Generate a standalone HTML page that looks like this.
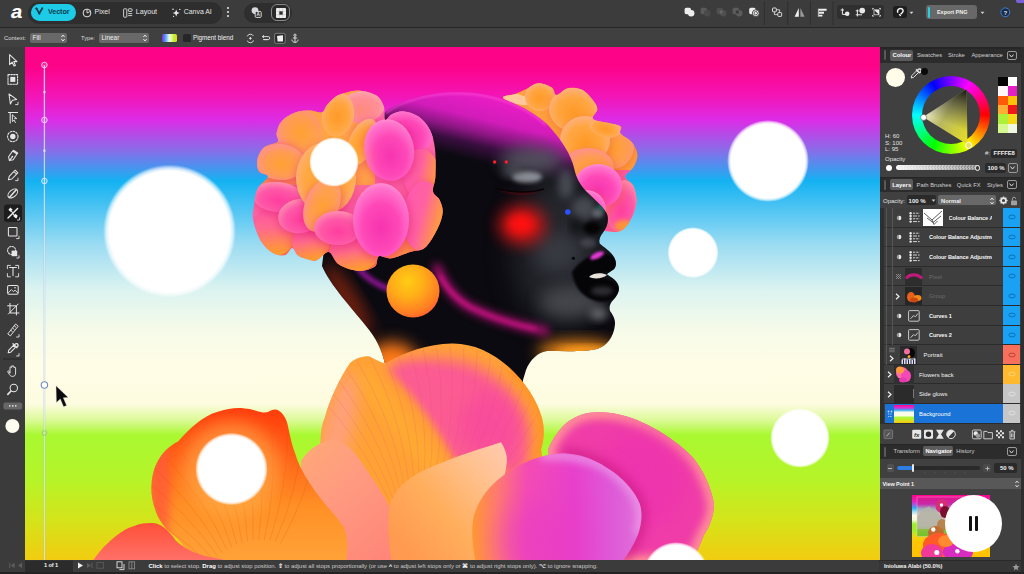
<!DOCTYPE html>
<html lang="en">
<head>
<meta charset="utf-8">
<title>Affinity – Inioluwa Alabi</title>
<style>
*{box-sizing:border-box;margin:0;padding:0}
html,body{width:1024px;height:574px;overflow:hidden;background:#3b3b3b}
body{position:relative;font-family:"Liberation Sans",sans-serif;font-size:7.5px;color:#e4e4e4;-webkit-font-smoothing:antialiased}
.abs{position:absolute}
.t{position:absolute;white-space:nowrap;line-height:10px;height:10px}
.b{font-weight:bold}
/* top bars */
#topbar{left:0;top:0;width:1024px;height:27px;background:#3c3c3c}
#ctxbar{left:0;top:27px;width:1024px;height:20px;background:#404040;border-top:1px solid #262626}
#lefttools{left:0;top:47px;width:25px;height:513px;background:#3b3b3b}
#status{left:0;top:560px;width:879px;height:14px;background:#3b3b3b}
#panel{left:879px;top:47px;width:145px;height:527px;background:#404040}
.pill{position:absolute;background:#2e2e2e;border-radius:11px}
.sel{position:absolute;background:#686868;border-radius:2px}
.dark{position:absolute;background:#2a2a2a;border-radius:2px}
.tabrow{position:absolute;left:0;width:145px;height:14px;background:#2c2c2c}
.tabhi{position:absolute;background:#5c5c5c;border-radius:2px;height:10.5px}
.chev{position:absolute;width:9.5px;height:9.5px;border:1px solid #9a9a9a;border-radius:2px}
.row{position:absolute;left:0;width:145px;height:19.6px;border-bottom:1px solid #2b2b2b}
.vis{position:absolute;left:124.3px;top:0;width:17px;height:18.8px}
.dim{color:#777}
svg{position:absolute;overflow:visible}
</style>
</head>
<body>
<!-- ARTWORK -->
<div class="abs" id="canvas" style="left:25px;top:47px;width:855px;height:513px;overflow:hidden;background:#fff;z-index:2">
<svg style="left:-25px;top:-47px" width="1024" height="574" viewBox="0 0 1024 574">
<defs>
<linearGradient id="bg" x1="0" y1="47" x2="0" y2="560" gradientUnits="userSpaceOnUse">
<stop offset="0.0000" stop-color="#fd0386"/>
<stop offset="0.0370" stop-color="#fd0388"/>
<stop offset="0.0936" stop-color="#f414b4"/>
<stop offset="0.1423" stop-color="#dc2ce6"/>
<stop offset="0.2008" stop-color="#8a6ce8"/>
<stop offset="0.2612" stop-color="#14b2f2"/>
<stop offset="0.3275" stop-color="#5cc8f3"/>
<stop offset="0.3860" stop-color="#9cdcf2"/>
<stop offset="0.4737" stop-color="#dcf3f0"/>
<stop offset="0.5517" stop-color="#f6fbe9"/>
<stop offset="0.6199" stop-color="#fffde6"/>
<stop offset="0.6959" stop-color="#fdfce0"/>
<stop offset="0.7271" stop-color="#dcfa98"/>
<stop offset="0.7563" stop-color="#a9f831"/>
<stop offset="0.8441" stop-color="#b6f428"/>
<stop offset="0.9220" stop-color="#d4e41a"/>
<stop offset="1.0000" stop-color="#f2cc10"/>
</linearGradient>
<filter color-interpolation-filters="sRGB" id="b1" x="-20%" y="-20%" width="140%" height="140%"><feGaussianBlur stdDeviation="1"/></filter>
<filter color-interpolation-filters="sRGB" id="b2" x="-30%" y="-30%" width="160%" height="160%"><feGaussianBlur stdDeviation="2.2"/></filter>
<filter color-interpolation-filters="sRGB" id="b4" x="-40%" y="-40%" width="180%" height="180%"><feGaussianBlur stdDeviation="4"/></filter>
<filter color-interpolation-filters="sRGB" id="b8" x="-50%" y="-50%" width="200%" height="200%"><feGaussianBlur stdDeviation="8"/></filter>
<filter color-interpolation-filters="sRGB" id="b14" x="-60%" y="-60%" width="220%" height="220%"><feGaussianBlur stdDeviation="14"/></filter>
<radialGradient id="glow"><stop offset="0" stop-color="#fff"/><stop offset="0.905" stop-color="#fff"/><stop offset="0.95" stop-color="#fff" stop-opacity="0.7"/><stop offset="1" stop-color="#fff" stop-opacity="0"/></radialGradient>

<radialGradient id="ball" cx="0.4" cy="0.32" r="0.75"><stop offset="0" stop-color="#ffcc14"/><stop offset="0.4" stop-color="#ffae18"/><stop offset="0.8" stop-color="#ff7e24"/><stop offset="1" stop-color="#ff5a30"/></radialGradient>
<linearGradient id="headg" x1="470" y1="92" x2="450" y2="172" gradientUnits="userSpaceOnUse"><stop offset="0" stop-color="#ea1cc4"/><stop offset="0.28" stop-color="#d21cba"/><stop offset="0.46" stop-color="#8a1682"/><stop offset="0.6" stop-color="#3a0e40"/><stop offset="0.8" stop-color="#0b0a10"/></linearGradient>
<clipPath id="headclip"><path id="headp" d="M384,113 C400,100 430,92 456,92 C490,91 525,104 547,124 C562,140 571,155 574,168 C576,178 580,184 584,189 C590,196 602,205 606.5,213 C609.500,219 607.500,227 603,232.500 C600,236 598.500,240 599.500,243.500 C603,247 611,251 614.500,258 C616.500,262 616.500,266 614.500,268.500 C612,271 608,272.500 607,274.500 C611,277 618.500,281 619,288 C619,294 615,298 611.500,302 C609.500,305 609,308 610,311 C613,315 616,320 614.800,326 C613.500,337 607,346 597,349 C585,352 565,351 547,351 C538,352 530,360 526,370 L523,380 L522,420 L392,420 L385,364 C382,350 376,338 366,326 C352,308 330,285 322,266 C330,200 350,140 384,113 Z"/></clipPath>

<radialGradient id="pk" cx="0.5" cy="0.6" r="0.65"><stop offset="0" stop-color="#f634ae"/><stop offset="0.5" stop-color="#ff48b8"/><stop offset="0.82" stop-color="#ff74cc"/><stop offset="1" stop-color="#ffa4da"/></radialGradient>
<radialGradient id="pk2" cx="0.5" cy="0.6" r="0.65"><stop offset="0" stop-color="#ff3e9e"/><stop offset="0.55" stop-color="#ff58a8"/><stop offset="1" stop-color="#ff9ab0"/></radialGradient>
<radialGradient id="or" cx="0.5" cy="0.55" r="0.62"><stop offset="0" stop-color="#ff9a26"/><stop offset="0.55" stop-color="#ffa642"/><stop offset="1" stop-color="#ffb494"/></radialGradient>
<radialGradient id="orp" cx="0.55" cy="0.55" r="0.62"><stop offset="0" stop-color="#ffa232"/><stop offset="0.55" stop-color="#ff9c54"/><stop offset="1" stop-color="#ff8e9e"/></radialGradient>
<linearGradient id="po" x1="0" y1="0" x2="1" y2="0.3"><stop offset="0" stop-color="#ff58b4"/><stop offset="0.55" stop-color="#ff62a0"/><stop offset="1" stop-color="#ff9a40"/></linearGradient>
<linearGradient id="pob" x1="0" y1="0" x2="0.2" y2="1"><stop offset="0" stop-color="#ff54ac"/><stop offset="0.5" stop-color="#ff6a8c"/><stop offset="1" stop-color="#ff9a30"/></linearGradient>
<radialGradient id="peach" cx="0.45" cy="0.6" r="0.65"><stop offset="0" stop-color="#ff8a7c"/><stop offset="0.6" stop-color="#ff8e98"/><stop offset="1" stop-color="#ffaab0"/></radialGradient>

<linearGradient id="bigp" x1="325" y1="0" x2="545" y2="0" gradientUnits="userSpaceOnUse"><stop offset="0" stop-color="#ff9a50"/><stop offset="0.2" stop-color="#ffa038"/><stop offset="0.42" stop-color="#ff8a60"/><stop offset="0.62" stop-color="#ff5c92"/><stop offset="0.8" stop-color="#ff5a8c"/><stop offset="0.93" stop-color="#ff8450"/><stop offset="1" stop-color="#ffa030"/></linearGradient>
<linearGradient id="bigp2" x1="0" y1="343" x2="0" y2="420" gradientUnits="userSpaceOnUse"><stop offset="0" stop-color="#ffa838" stop-opacity="1"/><stop offset="0.45" stop-color="#ffa838" stop-opacity="0.55"/><stop offset="1" stop-color="#ffa838" stop-opacity="0"/></linearGradient>
<linearGradient id="redp" x1="0" y1="408" x2="0" y2="560" gradientUnits="userSpaceOnUse"><stop offset="0" stop-color="#ff3c0c"/><stop offset="0.3" stop-color="#ff6016"/><stop offset="0.65" stop-color="#ff9026"/><stop offset="1" stop-color="#ffa238"/></linearGradient>
<linearGradient id="salm" x1="300" y1="450" x2="395" y2="560" gradientUnits="userSpaceOnUse"><stop offset="0" stop-color="#ffa878"/><stop offset="0.4" stop-color="#ff9a80"/><stop offset="1" stop-color="#ff8478"/></linearGradient>
<linearGradient id="smallo" x1="395" y1="540" x2="500" y2="450" gradientUnits="userSpaceOnUse"><stop offset="0" stop-color="#ff9a50"/><stop offset="0.4" stop-color="#ffae5c"/><stop offset="0.75" stop-color="#ffc08c"/><stop offset="1" stop-color="#ffc8a8"/></linearGradient>
<linearGradient id="backpk" x1="548" y1="420" x2="715" y2="540" gradientUnits="userSpaceOnUse"><stop offset="0" stop-color="#ff8a90"/><stop offset="0.25" stop-color="#f650a8"/><stop offset="0.55" stop-color="#ee38b0"/><stop offset="0.85" stop-color="#f45a90"/><stop offset="1" stop-color="#fa7878"/></linearGradient>
<linearGradient id="frontpk" x1="474" y1="0" x2="640" y2="0" gradientUnits="userSpaceOnUse"><stop offset="0" stop-color="#ff9638"/><stop offset="0.14" stop-color="#ff7a70"/><stop offset="0.32" stop-color="#f44cb4"/><stop offset="0.6" stop-color="#e840cc"/><stop offset="0.85" stop-color="#de5cd8"/><stop offset="1" stop-color="#e070d8"/></linearGradient>
<linearGradient id="blp" x1="0" y1="523" x2="0" y2="560" gradientUnits="userSpaceOnUse"><stop offset="0" stop-color="#ff5038"/><stop offset="1" stop-color="#ff7068"/></linearGradient>
<clipPath id="bigclip"><use href="#bigpp"/></clipPath>
<clipPath id="redclip"><path id="redpp" d="M151.6,484.5 C153,462 165,448 178,441.6 C190,428 203,416 217,412 C228,408 238,407.5 244.5,408.4 C255,409 262,414 268,412 C271,410 275,408.5 277.7,410 C283,413 286,418 287.5,424 C290,436 292,445 295,453 C300,470 310,484 318.7,496 C328,508 338,518 344,527.5 C348,538 348,550 346,562 L201.5,562 C192,555 184,547 178,539 C166,530 158,520 154.7,508 C152,500 151,492 151.6,484.5Z"/></clipPath>
<filter color-interpolation-filters="sRGB" id="b06" x="-10%" y="-10%" width="120%" height="120%"><feGaussianBlur stdDeviation="0.6"/></filter>
</defs>
<rect x="25" y="47" width="856" height="513" fill="url(#bg)"/>
<!--glows-->
<circle cx="169.5" cy="231" r="66.500" fill="url(#glow)"/>
<circle cx="768" cy="161" r="41" fill="url(#glow)"/>
<circle cx="693" cy="252.6" r="25.500" fill="url(#glow)"/>
<circle cx="800" cy="438" r="29.800" fill="url(#glow)"/>
<g id="backflower">
<clipPath id="bfclip"><path d="M503.0,98.0 C502.2,95.3 511.1,95.5 515.0,94.0 C519.0,92.5 522.9,90.6 526.7,88.8 C530.5,87.0 533.5,83.5 537.7,83.2 C541.9,83.0 548.7,85.3 551.8,87.3 C554.9,89.3 553.9,94.8 556.5,95.0 C559.1,95.2 563.3,89.1 567.5,88.2 C571.7,87.3 577.4,87.6 581.6,89.5 C585.8,91.4 590.0,96.5 592.6,99.8 C595.2,103.1 597.2,106.0 597.3,109.2 C597.4,112.4 590.9,116.7 593.0,119.0 C595.1,121.3 605.2,122.0 609.8,123.3 C614.4,124.5 619.0,124.8 620.8,126.5 C622.6,128.2 618.7,130.9 620.5,133.5 C622.3,136.1 629.0,138.7 631.8,142.2 C634.6,145.7 637.1,150.5 637.4,154.7 C637.7,158.9 635.5,163.6 633.4,167.3 C631.3,171.0 625.0,173.6 625.0,176.7 C625.0,179.8 631.5,181.8 633.4,186.0 C635.3,190.2 636.8,196.6 636.5,201.8 C636.2,207.1 634.1,212.8 631.8,217.5 C629.4,222.2 626.1,227.7 622.4,230.0 C618.7,232.3 615.2,232.4 609.8,231.6 C604.4,230.8 598.3,230.3 590.0,225.0 C581.7,219.7 568.3,212.5 560.0,200.0 C551.7,187.5 546.7,165.0 540.0,150.0 C533.3,135.0 526.2,118.7 520.0,110.0 C513.8,101.3 503.8,100.7 503.0,98.0 Z"/></clipPath>
<path d="M503.0,98.0 C502.2,95.3 511.1,95.5 515.0,94.0 C519.0,92.5 522.9,90.6 526.7,88.8 C530.5,87.0 533.5,83.5 537.7,83.2 C541.9,83.0 548.7,85.3 551.8,87.3 C554.9,89.3 553.9,94.8 556.5,95.0 C559.1,95.2 563.3,89.1 567.5,88.2 C571.7,87.3 577.4,87.6 581.6,89.5 C585.8,91.4 590.0,96.5 592.6,99.8 C595.2,103.1 597.2,106.0 597.3,109.2 C597.4,112.4 590.9,116.7 593.0,119.0 C595.1,121.3 605.2,122.0 609.8,123.3 C614.4,124.5 619.0,124.8 620.8,126.5 C622.6,128.2 618.7,130.9 620.5,133.5 C622.3,136.1 629.0,138.7 631.8,142.2 C634.6,145.7 637.1,150.5 637.4,154.7 C637.7,158.9 635.5,163.6 633.4,167.3 C631.3,171.0 625.0,173.6 625.0,176.7 C625.0,179.8 631.5,181.8 633.4,186.0 C635.3,190.2 636.8,196.6 636.5,201.8 C636.2,207.1 634.1,212.8 631.8,217.5 C629.4,222.2 626.1,227.7 622.4,230.0 C618.7,232.3 615.2,232.4 609.8,231.6 C604.4,230.8 598.3,230.3 590.0,225.0 C581.7,219.7 568.3,212.5 560.0,200.0 C551.7,187.5 546.7,165.0 540.0,150.0 C533.3,135.0 526.2,118.7 520.0,110.0 C513.8,101.3 503.8,100.7 503.0,98.0 Z" fill="#ffa040"/>
<g clip-path="url(#bfclip)"><g filter="url(#b06)">
<rect x="560" y="170" width="90" height="70" fill="#ff58b0"/>
<ellipse cx="517" cy="99" rx="15" ry="5" transform="rotate(14 517 99)" fill="#ffc89a" />
<ellipse cx="540" cy="97" rx="15" ry="14" transform="rotate(0 540 97)" fill="url(#or)" />
<ellipse cx="575" cy="112.5" rx="26.5" ry="23.5" transform="rotate(10 575 112.5)" fill="#e8501c" opacity="0.35" filter="url(#b4)"/>
<ellipse cx="574" cy="110" rx="25" ry="22" transform="rotate(10 574 110)" fill="url(#or)" />
<ellipse cx="613" cy="148.5" rx="23.5" ry="24.5" transform="rotate(0 613 148.5)" fill="#e8501c" opacity="0.35" filter="url(#b4)"/>
<ellipse cx="612" cy="146" rx="22" ry="23" transform="rotate(0 612 146)" fill="url(#orp)" />
<ellipse cx="586" cy="142.5" rx="26.5" ry="25.5" transform="rotate(0 586 142.5)" fill="#e8501c" opacity="0.35" filter="url(#b4)"/>
<ellipse cx="585" cy="140" rx="25" ry="24" transform="rotate(0 585 140)" fill="url(#or)" />
<ellipse cx="605" cy="128" rx="16" ry="9" transform="rotate(15 605 128)" fill="url(#or)" />
<ellipse cx="589" cy="170.5" rx="27.5" ry="21.5" transform="rotate(0 589 170.5)" fill="#e8501c" opacity="0.35" filter="url(#b4)"/>
<ellipse cx="588" cy="168" rx="26" ry="20" transform="rotate(0 588 168)" fill="url(#orp)" />
<ellipse cx="623" cy="208.5" rx="17.5" ry="27.5" transform="rotate(8 623 208.5)" fill="#e8501c" opacity="0.35" filter="url(#b4)"/>
<ellipse cx="622" cy="206" rx="16" ry="26" transform="rotate(8 622 206)" fill="url(#pk2)" />
<ellipse cx="599" cy="188.5" rx="25.5" ry="23.5" transform="rotate(0 599 188.5)" fill="#e8501c" opacity="0.35" filter="url(#b4)"/>
<ellipse cx="598" cy="186" rx="24" ry="22" transform="rotate(0 598 186)" fill="url(#pk)" />
<ellipse cx="587" cy="212.5" rx="21.5" ry="21.5" transform="rotate(0 587 212.5)" fill="#e8501c" opacity="0.35" filter="url(#b4)"/>
<ellipse cx="586" cy="210" rx="20" ry="20" transform="rotate(0 586 210)" fill="url(#pk)" />
<ellipse cx="624" cy="226" rx="10" ry="6" fill="#ff9438" filter="url(#b2)"/>
</g></g>
</g>

<g id="head">
<use href="#headp" fill="url(#headg)"/>
<g clip-path="url(#headclip)">
<path d="M386,113 C402,100 430,93.500 456,93.500 C490,92.500 524,105 546,125" stroke="#ff48d4" stroke-width="2.500" fill="none" opacity="0.650" filter="url(#b1)"/>
<!-- gray highlights -->
<ellipse cx="560" cy="250" rx="45" ry="75" fill="#25272d" filter="url(#b14)"/>
<ellipse cx="532" cy="160" rx="32" ry="13" fill="#555861" opacity="0.9" filter="url(#b8)"/>
<ellipse cx="527" cy="177" rx="15" ry="5.500" fill="#a4a8b0" opacity="0.8" filter="url(#b2)"/>
<ellipse cx="512" cy="172" rx="10" ry="5" fill="#5c5f68" opacity="0.7" filter="url(#b4)"/>
<ellipse cx="566" cy="184" rx="8" ry="15" fill="#50535c" opacity="0.85" filter="url(#b4)"/>
<ellipse cx="584" cy="208" rx="12" ry="12" fill="#4c4f57" opacity="0.9" filter="url(#b4)"/>
<ellipse cx="598" cy="213" rx="6" ry="5" fill="#70747c" opacity="0.8" filter="url(#b2)"/>
<ellipse cx="558" cy="252" rx="22" ry="20" fill="#3a3c44" opacity="0.9" filter="url(#b8)"/>
<ellipse cx="572" cy="302" rx="32" ry="16" fill="#484a50" opacity="0.9" filter="url(#b8)"/>
<ellipse cx="599" cy="314" rx="9" ry="6" fill="#8a8a8e" opacity="0.7" filter="url(#b4)"/>
<ellipse cx="588" cy="243" rx="8" ry="5" fill="#484a52" opacity="0.8" filter="url(#b2)"/>
<ellipse cx="603" cy="206" rx="4.500" ry="4" fill="#0c8a6a" opacity="0.85" filter="url(#b2)"/>
<!-- eye -->
<path d="M496,188 C510,193 530,193 544,189 C530,197 508,196 496,188Z" fill="#4a0a14" filter="url(#b1)"/>
<path d="M496,188 C510,193 530,193 544,189" stroke="#050505" stroke-width="1.6" fill="none"/>
<!-- cheek -->
<ellipse cx="522" cy="225" rx="23" ry="19" fill="#e81414" opacity="0.9" filter="url(#b8)"/>
<ellipse cx="521" cy="224" rx="12" ry="9" fill="#ff1010" filter="url(#b4)"/>
<!-- nostril / nose shadow -->
<ellipse cx="592" cy="228" rx="9" ry="6.500" fill="#030303" filter="url(#b2)"/><ellipse cx="576" cy="226" rx="5" ry="8" fill="#050507" opacity="0.700" filter="url(#b4)"/>
<!-- lips -->
<path d="M572,272 C582,258 600,247 614.500,258 C617,263 616,268 612,271 C604,273 596,274 588,277 C598,276 612,278 619,288 C619,297 608,304 596,301 C584,298 574,288 572,272Z" fill="#050507" filter="url(#b1)"/>
<ellipse cx="597" cy="255.500" rx="7.500" ry="3" transform="rotate(-25 597 255.500)" fill="#e23ad2" filter="url(#b1)"/>
<path d="M589,277 C594,272.500 602,272.500 607,275 C603,278.500 594,279.500 589,277Z" fill="#e8e2dc"/>
<ellipse cx="602" cy="291" rx="11" ry="4.500" fill="#2c2c32" filter="url(#b2)"/>
<!-- orange glows near chin and neck -->
<ellipse cx="578" cy="352" rx="40" ry="11" fill="#ff9218" filter="url(#b8)"/><ellipse cx="585" cy="352" rx="26" ry="5" fill="#ffa020" filter="url(#b4)"/>
<ellipse cx="392" cy="368" rx="28" ry="26" fill="#ff7a18" filter="url(#b8)"/>
<ellipse cx="348" cy="300" rx="9" ry="42" transform="rotate(-32 348 300)" fill="#b03010" opacity="0.7" filter="url(#b8)"/>
<!-- magenta line on jaw -->
<path d="M358,268 C366,278 376,285 392,290" stroke="#8a1490" stroke-width="6" fill="none" stroke-linecap="round" filter="url(#b2)"/>
<path d="M437,268 C444,284 452,296 466,305 C490,318 515,325 545,331" stroke="#b81078" stroke-width="8" fill="none" stroke-linecap="round" filter="url(#b4)"/><path d="M440,276 C447,290 456,299 470,307 C492,318 512,324 535,329" stroke="#d8148c" stroke-width="3" fill="none" stroke-linecap="round" filter="url(#b2)"/>
</g>
<circle cx="494.6" cy="162" r="1.7" fill="#ff2020"/><circle cx="506.3" cy="162" r="1.7" fill="#ff2020"/>
<circle cx="567.8" cy="212" r="2.8" fill="#2a50ff"/>
<circle cx="573.4" cy="258.2" r="1.5" fill="#000"/>
</g>
<circle cx="413" cy="291" r="26.5" fill="url(#ball)"/>

<g id="flower">
<clipPath id="flclip"><path d="M360.2,90.7 C354.8,90.2 348.6,92.0 344.5,93.0 C340.4,94.0 338.7,94.6 335.8,96.6 C332.9,98.6 329.3,102.4 327.0,105.0 C324.7,107.6 324.8,111.4 321.9,112.3 C319.0,113.2 314.1,110.5 309.7,110.5 C305.3,110.5 300.3,110.5 295.7,112.3 C291.1,114.0 285.0,117.5 281.8,121.0 C278.6,124.5 277.3,129.5 276.6,133.0 C275.9,136.5 279.6,139.6 277.6,141.9 C275.6,144.2 267.8,144.1 264.4,147.0 C261.0,149.9 258.3,155.2 257.4,159.3 C256.5,163.4 257.2,168.6 259.0,171.5 C260.8,174.4 268.2,173.8 267.9,176.7 C267.6,179.6 259.7,184.1 257.4,189.0 C255.1,193.9 254.6,200.8 253.9,206.0 C253.2,211.2 252.0,214.2 253.2,220.0 C254.4,225.8 257.6,235.5 260.9,241.0 C264.2,246.5 269.0,250.7 273.0,253.0 C277.0,255.3 281.8,255.8 285.0,255.0 C288.2,254.2 289.9,248.0 292.0,248.0 C294.1,248.0 295.6,253.3 297.5,255.0 C299.4,256.7 300.5,257.1 303.6,258.0 C306.7,258.9 311.8,261.4 316.0,260.4 C320.2,259.4 324.9,251.3 328.7,252.0 C332.5,252.7 334.1,261.5 339.0,264.6 C343.9,267.8 352.1,270.5 358.0,270.9 C363.9,271.2 371.2,269.1 374.7,266.7 C378.2,264.2 376.1,257.6 378.9,256.2 C381.7,254.8 386.2,259.0 391.4,258.3 C396.6,257.6 404.4,253.8 410.0,252.0 C415.6,250.2 420.3,251.6 424.9,247.8 C429.5,244.0 434.4,234.9 437.4,229.0 C440.4,223.1 442.3,217.2 442.7,212.3 C443.1,207.4 441.1,203.2 439.5,199.7 C437.9,196.2 433.7,195.3 433.0,191.4 C432.3,187.5 435.1,183.3 435.4,176.2 C435.7,169.1 435.9,156.7 435.0,149.0 C434.1,141.3 432.7,135.4 430.0,130.0 C427.3,124.6 422.9,119.7 418.6,116.6 C414.3,113.5 408.5,111.8 404.0,111.4 C399.5,111.1 394.6,113.1 391.5,114.5 C388.4,115.9 386.4,121.0 385.2,119.7 C383.9,118.5 385.4,111.0 384.0,107.0 C382.6,103.0 380.8,98.4 376.8,95.7 C372.8,93.0 365.6,91.2 360.2,90.7 Z"/></clipPath>
<path d="M360.2,90.7 C354.8,90.2 348.6,92.0 344.5,93.0 C340.4,94.0 338.7,94.6 335.8,96.6 C332.9,98.6 329.3,102.4 327.0,105.0 C324.7,107.6 324.8,111.4 321.9,112.3 C319.0,113.2 314.1,110.5 309.7,110.5 C305.3,110.5 300.3,110.5 295.7,112.3 C291.1,114.0 285.0,117.5 281.8,121.0 C278.6,124.5 277.3,129.5 276.6,133.0 C275.9,136.5 279.6,139.6 277.6,141.9 C275.6,144.2 267.8,144.1 264.4,147.0 C261.0,149.9 258.3,155.2 257.4,159.3 C256.5,163.4 257.2,168.6 259.0,171.5 C260.8,174.4 268.2,173.8 267.9,176.7 C267.6,179.6 259.7,184.1 257.4,189.0 C255.1,193.9 254.6,200.8 253.9,206.0 C253.2,211.2 252.0,214.2 253.2,220.0 C254.4,225.8 257.6,235.5 260.9,241.0 C264.2,246.5 269.0,250.7 273.0,253.0 C277.0,255.3 281.8,255.8 285.0,255.0 C288.2,254.2 289.9,248.0 292.0,248.0 C294.1,248.0 295.6,253.3 297.5,255.0 C299.4,256.7 300.5,257.1 303.6,258.0 C306.7,258.9 311.8,261.4 316.0,260.4 C320.2,259.4 324.9,251.3 328.7,252.0 C332.5,252.7 334.1,261.5 339.0,264.6 C343.9,267.8 352.1,270.5 358.0,270.9 C363.9,271.2 371.2,269.1 374.7,266.7 C378.2,264.2 376.1,257.6 378.9,256.2 C381.7,254.8 386.2,259.0 391.4,258.3 C396.6,257.6 404.4,253.8 410.0,252.0 C415.6,250.2 420.3,251.6 424.9,247.8 C429.5,244.0 434.4,234.9 437.4,229.0 C440.4,223.1 442.3,217.2 442.7,212.3 C443.1,207.4 441.1,203.2 439.5,199.7 C437.9,196.2 433.7,195.3 433.0,191.4 C432.3,187.5 435.1,183.3 435.4,176.2 C435.7,169.1 435.9,156.7 435.0,149.0 C434.1,141.3 432.7,135.4 430.0,130.0 C427.3,124.6 422.9,119.7 418.6,116.6 C414.3,113.5 408.5,111.8 404.0,111.4 C399.5,111.1 394.6,113.1 391.5,114.5 C388.4,115.9 386.4,121.0 385.2,119.7 C383.9,118.5 385.4,111.0 384.0,107.0 C382.6,103.0 380.8,98.4 376.8,95.7 C372.8,93.0 365.6,91.2 360.2,90.7 Z" fill="#ff6aa8"/>
<g clip-path="url(#flclip)"><g filter="url(#b06)">
<rect x="245" y="85" width="130" height="100" fill="#ffa048"/>
<rect x="245" y="225" width="200" height="50" fill="#ff9440"/>
<ellipse cx="362" cy="107" rx="23" ry="16" transform="rotate(-8 362 107)" fill="url(#peach)" />
<ellipse cx="338" cy="115" rx="16" ry="22" transform="rotate(10 338 115)" fill="url(#or)" />
<ellipse cx="298" cy="132" rx="23" ry="25" transform="rotate(-35 298 132)" fill="url(#orp)" />
<ellipse cx="281" cy="164.5" rx="26.5" ry="19.5" transform="rotate(5 281 164.5)" fill="#e01870" opacity="0.45" filter="url(#b4)"/>
<ellipse cx="280" cy="162" rx="25" ry="18" transform="rotate(5 280 162)" fill="url(#orp)" />
<ellipse cx="409" cy="131" rx="25" ry="21" transform="rotate(25 409 131)" fill="url(#pk)" />
<ellipse cx="422" cy="176.5" rx="19.5" ry="26.5" transform="rotate(0 422 176.5)" fill="#e01870" opacity="0.45" filter="url(#b4)"/>
<ellipse cx="421" cy="174" rx="18" ry="25" transform="rotate(0 421 174)" fill="url(#po)" />
<ellipse cx="424" cy="218.5" rx="21.5" ry="36.5" transform="rotate(5 424 218.5)" fill="#e01870" opacity="0.45" filter="url(#b4)"/>
<ellipse cx="423" cy="216" rx="20" ry="35" transform="rotate(5 423 216)" fill="url(#po)" />
<ellipse cx="276" cy="234.5" rx="23.5" ry="25.5" transform="rotate(10 276 234.5)" fill="#e01870" opacity="0.45" filter="url(#b4)"/>
<ellipse cx="275" cy="232" rx="22" ry="24" transform="rotate(10 275 232)" fill="url(#pob)" />
<ellipse cx="279" cy="199.5" rx="27.5" ry="16.5" transform="rotate(5 279 199.5)" fill="#e01870" opacity="0.45" filter="url(#b4)"/>
<ellipse cx="278" cy="197" rx="26" ry="15" transform="rotate(5 278 197)" fill="url(#pk2)" />
<ellipse cx="312" cy="245.5" rx="20.5" ry="19.5" transform="rotate(0 312 245.5)" fill="#e01870" opacity="0.45" filter="url(#b4)"/>
<ellipse cx="311" cy="243" rx="19" ry="18" transform="rotate(0 311 243)" fill="url(#pob)" />
<ellipse cx="355" cy="255.5" rx="26.5" ry="20.5" transform="rotate(0 355 255.5)" fill="#e01870" opacity="0.45" filter="url(#b4)"/>
<ellipse cx="354" cy="253" rx="25" ry="19" transform="rotate(0 354 253)" fill="url(#pob)" />
<ellipse cx="301" cy="218.5" rx="23.5" ry="18.5" transform="rotate(-10 301 218.5)" fill="#e01870" opacity="0.45" filter="url(#b4)"/>
<ellipse cx="300" cy="216" rx="22" ry="17" transform="rotate(-10 300 216)" fill="url(#pk2)" />
<ellipse cx="327" cy="180.5" rx="31.5" ry="37.5" transform="rotate(0 327 180.5)" fill="#e01870" opacity="0.45" filter="url(#b4)"/>
<ellipse cx="326" cy="178" rx="30" ry="36" transform="rotate(0 326 178)" fill="url(#or)" />
<ellipse cx="323" cy="207.5" rx="18.5" ry="29.5" transform="rotate(22 323 207.5)" fill="#e01870" opacity="0.45" filter="url(#b4)"/>
<ellipse cx="322" cy="205" rx="17" ry="28" transform="rotate(22 322 205)" fill="url(#orp)" />
<ellipse cx="339" cy="230.5" rx="25.5" ry="18.5" transform="rotate(0 339 230.5)" fill="#e01870" opacity="0.45" filter="url(#b4)"/>
<ellipse cx="338" cy="228" rx="24" ry="17" transform="rotate(0 338 228)" fill="url(#pk2)" />
<ellipse cx="363" cy="144.5" rx="14.5" ry="26.5" transform="rotate(25 363 144.5)" fill="#e01870" opacity="0.45" filter="url(#b4)"/>
<ellipse cx="362" cy="142" rx="13" ry="25" transform="rotate(25 362 142)" fill="url(#or)" />
<ellipse cx="390" cy="152.5" rx="26.5" ry="32.5" transform="rotate(-10 390 152.5)" fill="#e01870" opacity="0.45" filter="url(#b4)"/>
<ellipse cx="389" cy="150" rx="25" ry="31" transform="rotate(-10 389 150)" fill="url(#pk)" />
<ellipse cx="382" cy="222.5" rx="29.5" ry="38.5" transform="rotate(0 382 222.5)" fill="#e01870" opacity="0.45" filter="url(#b4)"/>
<ellipse cx="381" cy="220" rx="28" ry="37" transform="rotate(0 381 220)" fill="url(#pk)" />
</g></g>
<circle cx="334" cy="162" r="32" fill="#ffb040" opacity="0.5" filter="url(#b8)"/>
<circle cx="334" cy="162" r="24.800" fill="url(#glow)"/>
</g>
<g id="petals">
<!-- big back petal -->
<path id="bigpp" d="M369.5,356.4 C375,359 380,362 385,363.4 C405,352 428,344 451.6,343.5 C472,343 492,352 509,367.3 C525,382 537,400 542,418 C545,430 544,440 541,449.4 C543,460 545,470 545,485 L330,520 C322,500 318,470 320.7,437.7 C321,430 322,424 324.6,418 C330,398 340,378 350,363 C356,358 363,356 369.5,356.4Z" fill="#ffa236"/>
<g clip-path="url(#bigclip)">
<ellipse cx="338" cy="430" rx="14" ry="60" transform="rotate(14 338 430)" fill="#ffa07c" filter="url(#b8)"/>
<path d="M388,366 C410,358 440,356 470,364 C505,376 528,408 530,440 L526,480 L470,462 C452,432 425,398 388,366Z" fill="#fb5896" filter="url(#b8)"/><path d="M390,368 C415,364 450,370 480,392 L476,462 L456,462 C440,432 418,398 390,368Z" fill="#fb5c92" filter="url(#b4)"/>
<ellipse cx="488" cy="425" rx="30" ry="32" fill="#f84c9c" opacity="0.8" filter="url(#b8)"/>
<path d="M362,372 C382,402 410,438 436,470" stroke="#ffb030" stroke-width="14" fill="none" filter="url(#b8)" opacity="0.8"/>
<g stroke="#e8487c" stroke-width="0.7" fill="none" opacity="0.25"><path d="M389.8,502.7 Q360.1,435.0 306.7,383.9"/><path d="M393.6,500.2 Q368.3,430.7 318.2,376.4"/><path d="M397.5,498.0 Q376.7,427.1 330.2,369.6"/><path d="M401.5,496.1 Q385.3,423.9 342.6,363.6"/><path d="M405.7,494.4 Q394.1,421.3 355.3,358.4"/><path d="M409.9,492.9 Q403.0,419.3 368.3,354.0"/><path d="M414.3,491.8 Q412.1,417.9 381.6,350.5"/><path d="M418.6,490.9 Q421.2,417.0 395.1,347.8"/><path d="M423.1,490.3 Q430.4,416.8 408.8,346.1"/><path d="M427.6,490.0 Q439.5,417.1 422.5,345.1"/><path d="M432.0,490.0 Q448.6,418.0 436.3,345.1"/><path d="M436.5,490.3 Q457.7,419.5 450.0,345.9"/><path d="M441.0,490.9 Q466.6,421.5 463.6,347.6"/><path d="M445.3,491.7 Q475.4,424.1 477.1,350.2"/><path d="M449.7,492.8 Q484.0,427.3 490.5,353.7"/><path d="M453.9,494.2 Q492.4,431.1 503.5,358.0"/><path d="M458.1,495.9 Q500.5,435.3 516.3,363.1"/><path d="M462.1,497.8 Q508.3,440.1 528.7,369.0"/><path d="M466.1,500.0 Q515.8,445.3 540.7,375.7"/><path d="M469.8,502.4 Q523.0,451.0 552.3,383.2"/><path d="M473.4,505.1 Q529.8,457.2 563.4,391.4"/><path d="M476.8,508.0 Q536.1,463.8 573.9,400.2"/></g>
<path d="M509,367 C528,385 541,405 543,425 C545,440 541,450 536,458" stroke="#ff9226" stroke-width="9" fill="none" filter="url(#b4)"/>
</g>
<!-- salmon petal -->
<path d="M301,461 C308,450 320,441 334,439.6 C344,442 352,449 357.8,457 C368,472 378,486 386,500 C392,512 397,524 400,535 L402,562 L300,562Z" fill="url(#salm)"/>
<!-- red-orange petal w/ glow -->
<use href="#redpp" fill="url(#redp)"/>
<g clip-path="url(#redclip)">
<ellipse cx="160" cy="490" rx="10" ry="60" fill="#ff5a3a" opacity="0.8" filter="url(#b4)"/>
<g stroke="#e8400c" stroke-width="0.7" fill="none" opacity="0.28"><path d="M208.0,570.0 Q164.8,534.9 112.8,515.0"/><path d="M211.1,565.3 Q171.3,526.3 121.3,501.7"/><path d="M214.5,560.9 Q178.5,518.4 131.1,489.2"/><path d="M218.3,556.8 Q186.4,511.2 141.9,477.7"/><path d="M222.5,553.2 Q195.0,504.7 153.8,467.3"/><path d="M227.0,549.9 Q204.2,499.1 166.6,458.0"/><path d="M231.8,547.0 Q213.8,494.3 180.2,449.9"/><path d="M236.9,544.6 Q223.8,490.5 194.5,443.1"/><path d="M242.1,542.7 Q234.1,487.6 209.4,437.7"/><path d="M247.5,541.3 Q244.7,485.7 224.7,433.7"/><path d="M253.0,540.4 Q255.4,484.8 240.3,431.1"/><path d="M258.6,540.0 Q266.1,484.8 256.0,430.0"/><path d="M264.2,540.1 Q276.8,485.9 271.9,430.4"/><path d="M269.7,540.8 Q287.3,487.9 287.6,432.3"/><path d="M275.2,542.0 Q297.6,491.0 303.0,435.5"/><path d="M280.5,543.6 Q307.6,494.9 318.1,440.3"/></g>
<circle cx="231.5" cy="469" r="48" fill="#ffb450" opacity="0.55" filter="url(#b8)"/>
</g>
<circle cx="231.5" cy="469" r="36.300" fill="url(#glow)"/>
<!-- bottom-left petal -->
<path d="M92,562 C97,555 102,548 108,543 C117,534 126,528 135.5,525.4 C142,523 149,522.6 155.6,523.3 C163,525 170,532 175.7,540.4 C184,548 192,552 205,556 L235,562Z" fill="url(#blp)"/>
<!-- back right pink petal -->
<clipPath id="bkclip"><path d="M548,449.4 C553,438 560,428 567.5,422 C577,415 588,412 598.8,412.3 C618,412 637,419 653.4,428 C668,436 682,446 692.5,457 C703,470 711,486 714,504 C714,515 710,526 704,535 C700,545 696,553 692.5,562 L560,562Z"/></clipPath>
<path d="M548,449.4 C553,438 560,428 567.5,422 C577,415 588,412 598.8,412.3 C618,412 637,419 653.4,428 C668,436 682,446 692.5,457 C703,470 711,486 714,504 C714,515 710,526 704,535 C700,545 696,553 692.5,562 L560,562Z" fill="#f03ea8"/>
<g clip-path="url(#bkclip)">
<path d="M548,449.4 C553,438 560,428 567.5,422 C577,415 588,412 598.8,412.3 C618,412 637,419 653.4,428 C668,436 682,446 692.5,457 C703,470 711,486 714,504 C714,515 710,526 704,535 C700,545 696,553 692.5,562 L560,562Z" fill="none" stroke="#ff8e98" stroke-width="14" filter="url(#b4)"/>
<ellipse cx="640" cy="480" rx="45" ry="50" fill="#ee34ae" opacity="0.9" filter="url(#b14)"/>
<path d="M563.6,453.300 C583,454 600,462 614.4,472.800 C626,482 635,492 639.8,504 C643,515 641,526 637.8,535 C634,545 628,554 622,562" fill="none" stroke="#c81880" stroke-width="12" opacity="0.55" filter="url(#b4)"/>
</g>
<!-- small orange petal -->
<path d="M501,442.3 C505,448 507,455 507,461 C505,480 498,500 490,520 L480,562 L391.7,562 C388,540 387,520 389.8,504 C395,490 406,480 419,472.8 C440,462 470,452 501,442.3Z" fill="url(#smallo)"/>
<!-- front pink petal -->
<clipPath id="frclip"><path d="M563.6,453.3 C583,454 600,462 614.4,472.8 C626,482 635,492 639.8,504 C643,515 641,526 637.8,535 C634,545 628,554 622,562 L475.7,562 C472,545 471,530 473.8,515.8 C478,502 486,490 497,480.6 C515,465 540,454 563.6,453.3Z"/></clipPath>
<path d="M563.6,453.3 C583,454 600,462 614.4,472.8 C626,482 635,492 639.8,504 C643,515 641,526 637.8,535 C634,545 628,554 622,562 L475.7,562 C472,545 471,530 473.8,515.8 C478,502 486,490 497,480.6 C515,465 540,454 563.6,453.3Z" fill="url(#frontpk)"/>
<g clip-path="url(#frclip)">
<path d="M540,455 C583,454 600,462 614.4,472.800 C626,482 635,492 639.8,504 C643,515 641,526 637.8,535" fill="none" stroke="#eea0ea" stroke-width="9" opacity="0.8" filter="url(#b4)"/>
<ellipse cx="540" cy="540" rx="40" ry="40" fill="#e83cc4" opacity="0.6" filter="url(#b14)"/>
</g>
<circle cx="676" cy="575" r="33" fill="url(#glow)"/>
</g>

<g id="gradline">
<path d="M44.400,65 V560" stroke="#8fb0e0" stroke-width="1.600" opacity="0.550"/>
<path d="M44.400,65 V560" stroke="#ffffff" stroke-width="0.900" opacity="0.700"/>
<g fill="#ffffff" fill-opacity="0.150" stroke="#f4ecff" stroke-opacity="0.900" stroke-width="0.900">
<circle cx="44.400" cy="65" r="2.800"/><circle cx="44.400" cy="120" r="2.800"/><circle cx="44.400" cy="181" r="2.800"/>
</g>
<circle cx="44.400" cy="385" r="3.200" fill="#fff" stroke="#6d8fc4" stroke-width="1.100"/>
<circle cx="44.400" cy="433" r="2.300" fill="#c8f080" fill-opacity="0.600" stroke="#9ab8a0" stroke-width="0.800"/>
<g fill="#e8eeff" opacity="0.800"><rect x="43.300" y="91" width="2.200" height="2.200"/><rect x="43.300" y="149.500" width="2.200" height="2.200"/></g>
</g>
<path d="M56,385.800 L56.400,402.600 L60.300,398.900 L63.600,406.800 L66.600,405.400 L63.300,397.800 L68.200,397.400Z" fill="#0a0a0a" stroke="#d8d8d8" stroke-opacity="0.600" stroke-width="0.700"/>

</svg>

</div>

<!-- TOP BAR -->
<div class="abs" id="topbar">
<!-- logo -->
<svg style="left:9px;top:4px" width="16" height="16" viewBox="0 0 16 16"><text x="1" y="13.6" transform="translate(2.4 0) skewX(-10) scale(1.12 1)" font-family="Liberation Sans,sans-serif" font-weight="bold" font-size="18.5" fill="#fff">a</text></svg>
<div class="pill" style="left:28px;top:2px;width:194px;height:22px"></div>
<div class="abs" style="left:31px;top:3.5px;width:45px;height:17.5px;border-radius:9px;background:#1ecbe6"></div>
<svg style="left:35px;top:7.400px" width="9" height="9" viewBox="0 0 9 9"><path d="M1.400,1.400 L4.300,6.400 L7.200,1.400" fill="none" stroke="#0b3b52" stroke-width="1.700" stroke-linejoin="round" stroke-linecap="round"/><circle cx="1.400" cy="1.400" r="1" fill="#0b3b52"/><circle cx="7.200" cy="1.400" r="1" fill="#0b3b52"/><circle cx="4.300" cy="6.600" r="1.100" fill="#0b3b52"/></svg>
<div class="t b" style="left:48px;top:7px;color:#0b3b52;font-size:7.2px;letter-spacing:-0.1px">Vector</div>
<svg style="left:82px;top:7.5px" width="10" height="10" viewBox="0 0 10 10"><circle cx="5" cy="5" r="3.9" fill="none" stroke="#e0e0e0" stroke-width="1"/><path d="M5,5 L5,1.2 M5,5 L8.4,3.4" stroke="#e0e0e0" stroke-width="0.9" fill="none"/></svg>
<div class="t" style="left:94.6px;top:7px;color:#e6e6e6;font-size:7px">Pixel</div>
<svg style="left:123px;top:7.5px" width="10" height="10" viewBox="0 0 10 10"><rect x="0.6" y="0.8" width="3.2" height="8.4" rx="0.6" fill="none" stroke="#e0e0e0" stroke-width="0.9"/><rect x="5.4" y="0.8" width="3.6" height="2.6" rx="0.5" fill="none" stroke="#e0e0e0" stroke-width="0.9"/><path d="M5.2,5.6 H9.2 M5.2,7.6 H9.2" stroke="#e0e0e0" stroke-width="0.9"/></svg>
<div class="t" style="left:135.8px;top:7px;color:#e6e6e6;font-size:7.1px">Layout</div>
<svg style="left:171px;top:7px" width="11" height="11" viewBox="0 0 11 11"><path d="M5.2,2.4 L6.2,4.9 L8.7,5.9 L6.2,6.9 L5.2,9.4 L4.2,6.9 L1.7,5.9 L4.2,4.9Z" fill="#e8e8e8"/><circle cx="2" cy="2.2" r="0.8" fill="#e8e8e8"/><circle cx="8.8" cy="2.4" r="0.7" fill="#e8e8e8"/><circle cx="2.6" cy="9.4" r="0.6" fill="#e8e8e8"/></svg>
<div class="t" style="left:183.8px;top:7px;color:#e6e6e6;font-size:6.9px">Canva AI</div>
<svg style="left:226px;top:6px" width="4" height="12" viewBox="0 0 4 12"><circle cx="2" cy="2" r="1" fill="#e8e8e8"/><circle cx="2" cy="6" r="1" fill="#e8e8e8"/><circle cx="2" cy="10" r="1" fill="#e8e8e8"/></svg>
<!-- second pill group -->
<div class="pill" style="left:244px;top:2.5px;width:48px;height:20px;border-radius:10px"></div>
<svg style="left:250px;top:6px" width="14" height="13" viewBox="0 0 14 13"><circle cx="5" cy="4.6" r="3.4" fill="#d8d8d8"/><rect x="5.2" y="5.4" width="6" height="6" rx="1" fill="#2e2e2e" stroke="#e8e8e8" stroke-width="0.9"/><text x="6.4" y="10.4" font-size="4.6" font-weight="bold" fill="#e8e8e8" font-family="Liberation Sans,sans-serif">A</text></svg>
<div class="abs" style="left:271px;top:4px;width:19px;height:17px;border-radius:6px;border:1px solid #8a8a8a;background:#2a2a2a"></div>
<svg style="left:275.5px;top:7.5px" width="10" height="10" viewBox="0 0 10 10"><rect x="0" y="0" width="10" height="10" rx="1" fill="#f0f0f0"/><rect x="3" y="3" width="4" height="4" fill="#2a2a2a"/><path d="M3.3,0 V10 M6.7,0 V10 M0,3.3 H10 M0,6.7 H10" stroke="#bdbdbd" stroke-width="0.5"/></svg>
<!-- right icon cluster -->
<svg style="left:680px;top:0px" width="160" height="27" viewBox="680 0 160 27">
<path d="M764.300,1 V25 M787.700,1 V25 M810.400,1 V25 M833,1 V25" stroke="#2f2f2f" stroke-width="1"/>
<g fill="#eeeeee"><rect x="684.600" y="7.800" width="6.400" height="6.400" rx="1.600"/><circle cx="691.200" cy="13.200" r="3.200"/></g>
<g fill="#5a5a5a"><rect x="700.600" y="7.800" width="6.400" height="6.400" rx="1.600"/><circle cx="707.200" cy="13.200" r="3.200" fill="#4a4a4a"/></g>
<g fill="#4e4e4e"><rect x="716.600" y="7.800" width="6.400" height="6.400" rx="1.600"/><circle cx="723.200" cy="13.200" r="3.200"/><circle cx="721.200" cy="12" r="1.800" fill="#666"/></g>
<g fill="#5c5c5c"><rect x="732.600" y="7.800" width="6.400" height="6.400" rx="1.600"/><circle cx="739.200" cy="13.200" r="3.200"/><circle cx="737.400" cy="12" r="1.800" fill="#3c3c3c"/></g>
<g><rect x="749.200" y="7.800" width="6.400" height="6.400" rx="1.600" fill="#eeeeee"/><circle cx="755.800" cy="13.200" r="3.400" fill="#eeeeee" stroke="#3c3c3c" stroke-width="0.900"/><circle cx="755.800" cy="13.200" r="1.700" fill="none" stroke="#3c3c3c" stroke-width="0.800"/></g>
<g fill="none" stroke="#e8e8e8" stroke-width="0.950"><rect x="772.500" y="8" width="3.800" height="3.800" rx="0.700"/><rect x="777.800" y="12.600" width="3.800" height="3.800" rx="0.700"/><path d="M776.400,9.800 H779.600 V12.400 M777.600,14.600 H774.400 V12" stroke-width="0.800"/></g>
<path d="M798.800,8 V16.800 H794.600Z" fill="#f0f0f0"/><path d="M800.400,8 V16.800 H804.600Z" fill="#9a9a9a"/>
<path d="M818.400,8.600 V16.800" stroke="#ededed" stroke-width="0.800"/><path d="M819,9.800 H826.600 M819,12.700 H824 M819,15.600 H822.400" stroke="#ededed" stroke-width="1.900"/>
</svg>
<div class="pill" style="left:837px;top:5.200px;width:46.500px;height:14px;border-radius:3px;background:#2f2f2f"></div>
<svg style="left:836px;top:4px" width="50" height="18" viewBox="836 4 50 18">
<g fill="none" stroke="#e8e8e8" stroke-width="1"><path d="M842.400,8.400 V14.400 H848.400 M840.600,10 H844"/><circle cx="847.200" cy="13.800" r="2.300" fill="#e8e8e8" stroke="none"/></g>
<g><circle cx="862.200" cy="10.600" r="2.900" fill="#e8e8e8"/><path d="M857.400,9.600 V16.400 M855.800,14.800 H862 M855.800,10.800 H858.600" stroke="#e8e8e8" stroke-width="1" fill="none"/></g>
<g fill="none" stroke="#e8e8e8" stroke-width="0.900"><path d="M872.600,9.600 V8.400 H873.800 M879.200,8.400 H880.400 V9.600 M880.400,15 V16.200 H879.200 M873.800,16.200 H872.600 V15"/><path d="M874.200,10 H879 V14.800Z" fill="#e8e8e8" stroke="none"/><rect x="874" y="9.800" width="5" height="5" stroke-width="0.700"/></g>
</svg>
<div class="abs" style="left:893.400px;top:5.600px;width:13.400px;height:12.800px;border-radius:2.500px;background:#1e1e1e"></div>
<svg style="left:895.600px;top:7.400px" width="9" height="10" viewBox="0 0 9 10"><path d="M1.800,5.800 C0.800,3.400 2.400,1.400 4.600,1.500 C7,1.600 8,4.200 6.200,5.700 L4.600,7.200" fill="none" stroke="#f2f2f2" stroke-width="1.500" stroke-linecap="butt"/><path d="M3.400,7.600 l1.100,1" stroke="#f2f2f2" stroke-width="1.300" stroke-linecap="round"/></svg>
<svg style="left:909px;top:11px" width="5" height="4" viewBox="0 0 5 4"><path d="M0.6,0.8 L2.5,3 L4.4,0.8Z" fill="#d8d8d8"/></svg>
<div class="abs" style="left:926.200px;top:5.300px;width:51.200px;height:13.700px;border-radius:3px;background:#686868;overflow:hidden"><div class="abs" style="left:1.400px;top:1.400px;width:2.400px;height:10.900px;border-radius:1px;background:#25d0e0"></div></div>
<div class="t b" style="left:937px;top:7.300px;font-size:5.500px;letter-spacing:-0.050px;color:#f0f0f0">Export PNG</div>
<svg style="left:980.400px;top:10.800px" width="5" height="4" viewBox="0 0 5 4"><path d="M0.600,0.800 L2.500,3 L4.400,0.800Z" fill="#d8d8d8"/></svg>
<svg style="left:999px;top:6px" width="13" height="13" viewBox="0 0 13 13"><circle cx="6.300" cy="6.300" r="4.400" fill="#1b2944" stroke="#3f7fd2" stroke-width="1"/><text x="6.300" y="8.600" text-anchor="middle" font-size="6.200" font-weight="bold" fill="#d8e4fb" font-family="Liberation Sans,sans-serif">?</text></svg><div class="abs" style="left:1016px;top:-2px;width:9px;height:5px;border-radius:2px;background:#7a62d6"></div>

</div>
<div class="abs" id="ctxbar">
<div class="t" style="left:4px;top:4.6px;font-size:5.9px;color:#dcdcdc">Context:</div>
<div class="sel" style="left:30px;top:4.6px;width:36.5px;height:10.4px"></div>
<div class="t" style="left:32.5px;top:4.8px;font-size:6.4px;color:#efefef">Fill</div>
<svg style="left:60.5px;top:6px" width="4" height="8" viewBox="0 0 4 8"><path d="M0.4,3 L2,1 L3.6,3 M0.4,5 L2,7 L3.6,5" fill="none" stroke="#f0f0f0" stroke-width="0.9"/></svg>
<div class="t" style="left:81px;top:4.6px;font-size:5.7px;color:#dcdcdc">Type:</div>
<div class="sel" style="left:99px;top:4.6px;width:50px;height:10.4px"></div>
<div class="t" style="left:101.5px;top:4.8px;font-size:6.4px;color:#efefef">Linear</div>
<svg style="left:143px;top:6px" width="4" height="8" viewBox="0 0 4 8"><path d="M0.4,3 L2,1 L3.6,3 M0.4,5 L2,7 L3.6,5" fill="none" stroke="#f0f0f0" stroke-width="0.9"/></svg>
<div class="abs" style="left:162.4px;top:6px;width:14.6px;height:8px;border-radius:1.5px;background:linear-gradient(90deg,#8a2be0 0%,#4aa0f0 22%,#e8f8f0 48%,#e8f890 62%,#b8f030 80%,#f0d020 100%)"></div>
<div class="abs" style="left:182.5px;top:5.6px;width:8px;height:8.4px;border-radius:1.5px;background:#262626"></div>
<div class="t" style="left:193px;top:4.6px;font-size:6.3px;color:#f0f0f0">Pigment blend</div>
<svg style="left:245px;top:4px" width="60" height="12" viewBox="245 31 60 12">
<g fill="none" stroke="#e4e4e4" stroke-width="0.9"><path d="M247.2,35.4 A3.4,3.4 0 0 1 253.4,35 M253.6,39.4 A3.4,3.4 0 0 1 247.2,39.6"/><circle cx="250.4" cy="37.4" r="0.8" fill="#e4e4e4"/>
<path d="M262.4,35.6 H268.2 M262.4,35.6 l1.6,-1.4 M262.4,35.6 l1.6,1.4 M263,38.6 H267.6 a0,0 0 0 0 0,0"/><path d="M268.2,35.6 a1.5,1.5 0 0 1 0,3 H264"/></g>
<rect x="274.6" y="32.4" width="10.6" height="10" rx="1.6" fill="#2a2a2a" stroke="#9a9a9a" stroke-width="0.7"/>
<path d="M277,35 C279,34.4 281,34.2 283,34.2 V40.4 H277.4 C277.8,38.4 277,37 277,35Z" fill="#f0f0f0"/>
<g fill="none" stroke="#e4e4e4" stroke-width="0.9"><circle cx="295" cy="34.2" r="1.1"/><path d="M295,35.4 V41.2 M292.8,37 H297.2 M291.8,38.6 C292.2,40.6 293.6,41.4 295,41.4 C296.4,41.4 297.8,40.6 298.2,38.6"/></g>
</svg>

</div>
<div class="abs" id="lefttools">
<svg style="left:0;top:-47px" width="25" height="560" viewBox="0 0 25 560">
<g fill="none" stroke="#e6e6e6" stroke-width="1.05" stroke-linejoin="round" stroke-linecap="round">
<!-- move -->
<path d="M9.6,54.6 V64.6 L12.2,62.2 L14,66 L15.4,65.4 L13.8,61.6 H17Z"/>
<!-- artboard -->
<rect x="8" y="74.6" width="9.6" height="9.6" stroke-dasharray="1.6 1.2"/><rect x="10.3" y="76.9" width="5" height="5" fill="#e6e6e6" stroke="none"/>
<!-- node -->
<path d="M9,94 L16.6,99.4 L12.4,100.2 L10.4,104Z"/><path d="M15.6,104.6 H18 V102.2" stroke-width="0.9"/>
<!-- corner -->
<path d="M8.4,112.4 H17.6 M10.2,112.4 V123"/><path d="M12.4,115 V121.6 L14.2,120 L15.4,122.6 M12.4,115 L16.8,118.6 H14.6" stroke-width="0.9"/>
<!-- contour -->
<circle cx="12.8" cy="136.5" r="5.2" stroke-dasharray="1.7 1.3"/><circle cx="12.8" cy="136.5" r="2.7" fill="#e6e6e6" stroke="none"/>
<!-- pen -->
<path d="M9.4,160.6 L8.6,156.8 L12.6,151 L17,154 L13.2,159.8Z M9.4,160.6 L12,157.2"/><circle cx="12.4" cy="156.6" r="0.9" fill="#e6e6e6" stroke="none"/><path d="M13.6,150.6 L17.4,153.2" stroke-width="1.6"/>
<!-- pencil -->
<path d="M8.4,179.8 L9.2,176.4 L15.2,170.2 L17.8,172.8 L11.8,179Z M14,171.6 L16.4,174"/><path d="M15.6,180.6 H18 V178.2" stroke-width="0.9"/>
<!-- vector brush -->
<ellipse cx="12.8" cy="193.5" rx="5.6" ry="3.4" transform="rotate(-40 12.8 193.5)"/><path d="M9.4,197.4 L16.4,189.6" stroke-width="1.5"/>
</g>
<!-- selected fill tool -->
<rect x="4" y="204.4" width="18" height="17.6" rx="3" fill="#1d1d1d"/>
<g fill="none" stroke="#f2f2f2" stroke-width="1.05" stroke-linejoin="round" stroke-linecap="round">
<path d="M8,218 L17.6,208.4" stroke-width="1.4"/><path d="M9.6,209.6 L13,213 M13.4,214.4 L16.6,217.6" /><rect x="9" y="208.2" width="3" height="3" transform="rotate(45 10.5 209.7)" fill="#f2f2f2" stroke="none"/><rect x="14" y="214.4" width="3.2" height="3.2" transform="rotate(45 15.6 216)" fill="#f2f2f2" stroke="none"/><path d="M17.4,220 H19.6 V217.8" stroke-width="0.8"/>
</g>
<g fill="none" stroke="#e6e6e6" stroke-width="1.05" stroke-linejoin="round" stroke-linecap="round">
<!-- rectangle -->
<rect x="8.4" y="227.4" width="8.6" height="8.6" rx="0.8"/><path d="M16.6,238.6 H19 V236.2" stroke-width="0.9"/>
<!-- shape builder -->
<circle cx="11.6" cy="250.4" r="4" stroke-dasharray="1.5 1.2"/><rect x="11.6" y="250.6" width="5.6" height="5.6" fill="#e6e6e6" stroke="none"/><path d="M16.8,258 H19 V255.8" stroke-width="0.9"/>
<!-- frame text -->
<path d="M9.6,267.4 H16.4 M13,267.4 V275.6"/><path d="M7.4,268.6 V265.4 H10.4 M15.6,265.4 H18.6 V268.6 M18.6,273.6 V276.8 H15.6 M10.4,276.8 H7.4 V273.6" stroke-width="0.9"/>
<!-- image -->
<rect x="7.6" y="285.4" width="10.6" height="8.8" rx="1.4"/><path d="M8.4,292.6 L11.4,289.6 L13.4,291.6 L15,290.2 L17.6,292.6" stroke-width="0.9"/><circle cx="15" cy="287.8" r="0.8" fill="#e6e6e6" stroke="none"/>
<!-- crop -->
<path d="M10,303.4 V313 H19 M7.6,305.8 H16.4 V315 M8.4,314 L18.2,304" stroke-width="1"/>
<!-- measure -->
<path d="M8,333.6 L15.6,324 L18.2,326.2 L10.6,335.6Z M11,330.4 l1.3,1.1 M12.8,328.2 l1.3,1.1 M14.5,326 l1.3,1.1" stroke-width="0.95"/><path d="M16.6,337 H19 V334.6" stroke-width="0.9"/>
<!-- picker -->
<path d="M8.2,352.8 L8.8,350.2 L13.4,345.4 L15.4,347.4 L10.8,352.2Z"/><path d="M13,343.8 L17,347.8 M14.6,345 C15.4,342.8 18.6,343.2 18,345.8 C17.8,346.6 17,347 16.2,346.8" stroke-width="1.3"/><path d="M16.6,356 H19 V353.6" stroke-width="0.9"/>
<!-- hand -->
<path d="M10,372.8 V367.6 C10,366.6 11.4,366.6 11.4,367.6 V366.4 C11.4,365.4 12.8,365.4 12.8,366.4 V366.8 C12.800,365.800 14.2,365.800 14.2,366.8 V368 C14.2,367 15.6,367 15.6,368 V373 C15.6,375.400 14.4,376.400 12.6,376.400 C11,376.400 10.200,375.800 9.200,374.200 L7.800,371.800 C7.400,370.800 8.600,370.400 9.200,371.400Z" stroke-width="0.95"/>
<!-- zoom -->
<circle cx="13.800" cy="388" r="3.700"/><path d="M11,391 L7.800,394.400" stroke-width="1.6"/>
</g>
<path d="M3,359 H22" stroke="#262626" stroke-width="1"/>
<rect x="3.400" y="402.400" width="18.800" height="7" rx="2" fill="#666"/>
<circle cx="9.800" cy="405.900" r="0.800" fill="#f0f0f0"/><circle cx="12.800" cy="405.900" r="0.800" fill="#f0f0f0"/><circle cx="15.800" cy="405.900" r="0.800" fill="#f0f0f0"/>
<circle cx="12.400" cy="426" r="7" fill="#fffdf0"/>
</svg>

</div>
<div class="abs" id="status">
<svg style="left:0;top:0" width="879" height="14" viewBox="0 560 879 14">
<g fill="#5e5e5e"><path d="M9.200,562.800 V568 H10.200 V562.800Z M14.600,562.800 V568 L10.600,565.400Z"/><path d="M22,562.800 V568 L18,565.400Z"/></g>
<rect x="25" y="560.600" width="48" height="13.400" fill="#2b2b2b"/>
<path d="M78,562.600 V568.400 L83,565.500Z" fill="#f0f0f0"/>
<g fill="#5e5e5e"><path d="M87,562.800 V568 L91,565.400Z M91.400,562.800 V568 H92.400 V562.800Z"/></g>
<rect x="97" y="562.400" width="6.600" height="5.800" fill="none" stroke="#5a5a5a" stroke-width="0.9"/>
<g fill="none" stroke="#e4e4e4" stroke-width="0.9"><rect x="117" y="561.800" width="5" height="6"/><path d="M119.400,569.600 H124 V564" /></g>
<g fill="none" stroke="#8a8a8a" stroke-width="0.9"><rect x="129" y="561.800" width="5.600" height="7"/><path d="M131.800,561.800 V568.800"/></g>
</svg>
<div class="t b" style="left:44px;top:0.400px;font-size:5.700px;letter-spacing:-0.150px;color:#f4f4f4">1 of 1</div>
<div class="t" style="left:148.500px;top:0.600px;font-size:5.950px;color:#c9c9c9;letter-spacing:-0.015px"><b style="color:#fff">Click</b> to select stop. <b style="color:#fff">Drag</b> to adjust stop position. <b style="color:#fff">⇧</b> to adjust all stops proportionally (or use <b style="color:#fff">^</b> to adjust left stops only or <b style="color:#fff">⌘</b> to adjust right stops only). <b style="color:#fff">⌥</b> to ignore snapping.</div>

</div>
<div class="abs" id="panel">
<!-- coordinates inside panel: x = pageX-879, y = pageY-47 -->
<div class="abs" style="left:0;top:0;width:145px;height:1.500px;background:#262626"></div>
<div class="tabrow" style="top:1.500px"></div>
<div class="abs" style="left:5.400px;top:3.400px;width:1.600px;height:10px;background:#5a5a5a;border-radius:1px"></div>
<div class="tabhi" style="left:11.200px;top:3px;width:23px"></div>
<div class="t b" style="left:13.400px;top:3.400px;font-size:5.900px;color:#fff">Colour</div>
<div class="t" style="left:38px;top:3.400px;font-size:5.800px;color:#cfcfcf">Swatches</div>
<div class="t" style="left:69px;top:3.400px;font-size:5.800px;color:#cfcfcf">Stroke</div>
<div class="t" style="left:92.500px;top:3.400px;font-size:5.800px;color:#cfcfcf">Appearance</div>
<div class="chev" style="left:128px;top:3.500px"></div>
<svg style="left:130.300px;top:6.500px" width="5" height="4" viewBox="0 0 5 4"><path d="M0.500,0.600 L2.500,3 L4.500,0.600" fill="none" stroke="#e0e0e0" stroke-width="1"/></svg>
<!-- colour well -->
<div class="abs" style="left:6.800px;top:20.500px;width:19px;height:19px;border-radius:50%;background:#fffde9"></div>
<svg style="left:29.500px;top:18.500px" width="14" height="14" viewBox="0 0 14 14"><path d="M2.200,12 L2.800,9.600 L7.600,4.800 L9.400,6.600 L4.600,11.400Z" fill="none" stroke="#e0e0e0" stroke-width="1"/><path d="M7,3.400 L10.800,7.200 M8.600,4.600 C9.400,2 13,2.600 12,5.400 C11.800,6 11,6.600 10.200,6.200" fill="none" stroke="#e0e0e0" stroke-width="1.500"/></svg>
<div class="abs" style="left:42.200px;top:21.200px;width:6.800px;height:6.800px;border-radius:50%;background:#0a0a0a"></div>
<!-- wheel -->
<div class="abs" style="left:32.800px;top:28.800px;width:78.400px;height:78.400px;border-radius:50%;background:conic-gradient(from 90deg,#ff0000,#ffff00,#00ff00,#00ffff,#0000ff,#ff00ff,#ff0000)"></div>
<div class="abs" style="left:42.800px;top:38.800px;width:58.400px;height:58.400px;border-radius:50%;background:#404040"></div>
<svg style="left:0;top:0" width="145" height="130" viewBox="879 47 145 130">
<defs><linearGradient id="trg" x1="923" y1="117" x2="967.5" y2="144.600" gradientUnits="userSpaceOnUse"><stop offset="0" stop-color="#e8e8c8"/><stop offset="0.350" stop-color="#b8b860"/><stop offset="1" stop-color="#e8e020"/></linearGradient>
<linearGradient id="trg2" x1="966.500" y1="89" x2="951" y2="125" gradientUnits="userSpaceOnUse"><stop offset="0" stop-color="#111" stop-opacity="1"/><stop offset="0.500" stop-color="#333" stop-opacity="0.550"/><stop offset="1" stop-color="#444" stop-opacity="0"/></linearGradient></defs>
<path d="M923,117 L966.600,89.200 L967.500,144.600Z" fill="url(#trg)"/>
<path d="M923,117 L966.600,89.200 L967.500,144.600Z" fill="url(#trg2)"/>
<circle cx="923.600" cy="117.400" r="3" fill="#fff" stroke="#555" stroke-width="0.600"/>
<circle cx="968.600" cy="145.400" r="3" fill="#e8e060" stroke="#fff" stroke-width="1"/>
</svg>
<!-- swatches -->
<div class="abs" style="left:119px;top:29.700px;width:19px;height:56.700px;display:grid;grid-template-columns:9.500px 9.500px;grid-auto-rows:9.450px">
<i style="background:#050505"></i><i style="background:#fff"></i>
<i style="background:#fff8f8"></i><i style="background:#e621c4"></i>
<i style="background:#ff5a08"></i><i style="background:#ffc208"></i>
<i style="background:#ffae34"></i><i style="background:#f01818"></i>
<i style="background:#acf03a"></i><i style="background:#f6d818"></i>
<i style="background:#d6f88e"></i><i style="background:#f0f8e2"></i>
</div>
<div class="t" style="left:6px;top:83.500px;font-size:6px;color:#e0e0e0">H: 60</div>
<div class="t" style="left:6px;top:90.500px;font-size:6px;color:#e0e0e0">S: 100</div>
<div class="t" style="left:6px;top:97.300px;font-size:6px;color:#e0e0e0">L: 95</div>
<div class="t" style="left:106px;top:101px;font-size:6px;color:#e0e0e0">#:</div>
<div class="dark" style="left:112px;top:101.500px;width:26px;height:9.200px"></div>
<div class="t b" style="left:114.600px;top:101.200px;font-size:5.800px;color:#f0f0f0">FFFFE8</div>
<div class="t" style="left:6px;top:107.400px;font-size:6px;color:#e0e0e0">Opacity</div>
<div class="abs" style="left:7px;top:118px;width:6px;height:6px;border-radius:50%;background:#fff"></div>
<div class="abs" style="left:17px;top:118.400px;width:84px;height:5px;border-radius:2.500px;background:linear-gradient(90deg,rgba(255,255,255,0.950),rgba(180,180,180,0.300)),repeating-conic-gradient(#aaa 0 25%,#666 0 50%) 0 0/3px 3px"></div>
<div class="abs" style="left:95.700px;top:118.100px;width:5.800px;height:5.800px;border-radius:50%;border:1.200px solid #f0f0f0;background:#404040"></div>
<div class="dark" style="left:106px;top:116px;width:21px;height:9.600px"></div>
<div class="t b" style="left:108.500px;top:116px;font-size:6px;color:#f0f0f0">100 %</div>
<div class="chev" style="left:129px;top:116px"></div>
<svg style="left:131.300px;top:119px" width="5" height="4" viewBox="0 0 5 4"><path d="M0.500,0.600 L2.500,3 L4.500,0.600" fill="none" stroke="#e0e0e0" stroke-width="1"/></svg>
<!-- LAYERS -->
<div class="abs" style="left:0;top:129.500px;width:145px;height:1.500px;background:#262626"></div>
<div class="tabrow" style="top:131px;height:13.500px"></div>
<div class="abs" style="left:5.400px;top:132.600px;width:1.600px;height:10px;background:#5a5a5a;border-radius:1px"></div>
<div class="tabhi" style="left:11px;top:132.300px;width:23px"></div>
<div class="t b" style="left:13.200px;top:132.700px;font-size:5.900px;color:#fff">Layers</div>
<div class="t" style="left:37.600px;top:132.700px;font-size:5.800px;color:#cfcfcf">Path Brushes</div>
<div class="t" style="left:77.800px;top:132.700px;font-size:5.800px;color:#cfcfcf">Quick FX</div>
<div class="t" style="left:108px;top:132.700px;font-size:5.800px;color:#cfcfcf">Styles</div>
<div class="chev" style="left:128px;top:132.800px"></div>
<svg style="left:130.300px;top:135.800px" width="5" height="4" viewBox="0 0 5 4"><path d="M0.500,0.600 L2.500,3 L4.500,0.600" fill="none" stroke="#e0e0e0" stroke-width="1"/></svg>
<!-- opacity row -->
<div class="t" style="left:4px;top:148.600px;font-size:6px;color:#e0e0e0">Opacity:</div>
<div class="dark" style="left:27.700px;top:148.400px;width:29px;height:10px"></div>
<div class="t b" style="left:29.600px;top:148.600px;font-size:6px;color:#f0f0f0">100 %</div>
<svg style="left:51.500px;top:152px" width="5" height="4" viewBox="0 0 5 4"><path d="M0.600,0.600 L2.500,2.800 L4.400,0.600Z" fill="#d0d0d0"/></svg>
<div class="sel" style="left:59px;top:148.400px;width:57.500px;height:10px"></div>
<div class="t b" style="left:62px;top:148.600px;font-size:5.800px;color:#f0f0f0">Normal</div>
<svg style="left:110.500px;top:149.500px" width="4" height="8" viewBox="0 0 4 8"><path d="M0.400,3 L2,1 L3.600,3 M0.400,5 L2,7 L3.600,5" fill="none" stroke="#f0f0f0" stroke-width="0.900"/></svg>
<svg style="left:119.500px;top:149px" width="9" height="9" viewBox="0 0 9 9"><circle cx="4.500" cy="4.500" r="2.400" fill="none" stroke="#e8e8e8" stroke-width="1.600"/><g stroke="#e8e8e8" stroke-width="1.300"><path d="M4.500,0.400 V1.800 M4.500,7.200 V8.600 M0.400,4.500 H1.800 M7.200,4.500 H8.600 M1.600,1.600 L2.600,2.600 M6.400,6.400 L7.400,7.400 M1.600,7.400 L2.600,6.400 M6.400,2.600 L7.400,1.600"/></g></svg>
<svg style="left:130.500px;top:148.600px" width="8" height="10" viewBox="0 0 8 10"><rect x="1" y="4.400" width="6" height="4.800" rx="0.800" fill="#a0a0a0"/><path d="M2.400,4.400 V2.800 a1.600,1.600 0 0 1 3.200,0" fill="none" stroke="#a0a0a0" stroke-width="1"/></svg>
<!--LAYERROWS-->
<div class="row" style="background:#3e3e3e;top:161px;height:19.6px"><div class="abs" style="left:0;top:0;width:5px;height:19.6px;background:#2f2f2f"></div><div class="abs" style="left:6.800px;top:0;width:1px;height:19.6px;background:#555"></div><div class="abs" style="left:12.800px;top:0;width:1px;height:19.6px;background:#555"></div><svg style="left:17px;top:6.8px" width="6" height="6" viewBox="0 0 6 6"><circle cx="3" cy="3" r="2.3" fill="#9a9a9a"/><path d="M3,0.700 A2.300,2.300 0 0 1 3,5.300Z" fill="#e8e8e8"/></svg><svg style="left:28.5px;top:3.3px" width="13" height="13" viewBox="0 0 13 13"><g stroke="#e8e8e8" stroke-width="0.9" fill="#e8e8e8"><circle cx="2.6" cy="2.2" r="1.2" stroke="none"/><path d="M5,2.2 H11.6" stroke-dasharray="2.2 1"/><circle cx="2.6" cy="5" r="1.2" stroke="none"/><path d="M5,5 H11.6" stroke-dasharray="4 1"/><circle cx="2.6" cy="7.8" r="1.2" stroke="none"/><path d="M5,7.8 H11.6" stroke-dasharray="2.2 1"/><circle cx="2.6" cy="10.6" r="1.2" stroke="none"/><path d="M5,10.6 H11.6" stroke-dasharray="4 1"/></g></svg><div class="abs" style="left:44px;top:1.300px;width:19.700px;height:17px;background:#fff"></div><svg style="left:44px;top:1.300px" width="20" height="17" viewBox="0 0 20 17"><path d="M1,4 L9,11 L19,2 M4,9 L10,13.500 L18,7 M9,11 L11,15.500 L14.500,12" fill="none" stroke="#333" stroke-width="0.800"/></svg><div class="t b" style="left:69.500px;top:4.8px;font-size:5.600px;letter-spacing:-0.100px;color:#f4f4f4;width:43.500px;overflow:hidden">Colour Balance A</div><div class="vis" style="background:#19a2f4;height:18.8px"><svg style="left:5px;top:6.4px" width="8" height="6" viewBox="0 0 8 6"><ellipse cx="4" cy="3" rx="3.2" ry="1.9" fill="none" stroke="#0d64a8" stroke-width="0.8"/></svg></div></div>
<div class="row" style="background:#3e3e3e;top:180.6px;height:19.6px"><div class="abs" style="left:0;top:0;width:5px;height:19.6px;background:#2f2f2f"></div><div class="abs" style="left:6.800px;top:0;width:1px;height:19.6px;background:#555"></div><div class="abs" style="left:12.800px;top:0;width:1px;height:19.6px;background:#555"></div><svg style="left:17px;top:6.8px" width="6" height="6" viewBox="0 0 6 6"><circle cx="3" cy="3" r="2.3" fill="#9a9a9a"/><path d="M3,0.700 A2.300,2.300 0 0 1 3,5.300Z" fill="#e8e8e8"/></svg><svg style="left:28.5px;top:3.3px" width="13" height="13" viewBox="0 0 13 13"><g stroke="#e8e8e8" stroke-width="0.9" fill="#e8e8e8"><circle cx="2.6" cy="2.2" r="1.2" stroke="none"/><path d="M5,2.2 H11.6" stroke-dasharray="2.2 1"/><circle cx="2.6" cy="5" r="1.2" stroke="none"/><path d="M5,5 H11.6" stroke-dasharray="4 1"/><circle cx="2.6" cy="7.8" r="1.2" stroke="none"/><path d="M5,7.8 H11.6" stroke-dasharray="2.2 1"/><circle cx="2.6" cy="10.6" r="1.2" stroke="none"/><path d="M5,10.6 H11.6" stroke-dasharray="4 1"/></g></svg><div class="t b" style="left:50px;top:4.8px;font-size:5.600px;letter-spacing:-0.100px;color:#f4f4f4;width:63px;overflow:hidden">Colour Balance Adjustme</div><div class="vis" style="background:#19a2f4;height:18.8px"><svg style="left:5px;top:6.4px" width="8" height="6" viewBox="0 0 8 6"><ellipse cx="4" cy="3" rx="3.2" ry="1.9" fill="none" stroke="#0d64a8" stroke-width="0.8"/></svg></div></div>
<div class="row" style="background:#3e3e3e;top:200.2px;height:19.6px"><div class="abs" style="left:0;top:0;width:5px;height:19.6px;background:#2f2f2f"></div><div class="abs" style="left:6.800px;top:0;width:1px;height:19.6px;background:#555"></div><div class="abs" style="left:12.800px;top:0;width:1px;height:19.6px;background:#555"></div><svg style="left:17px;top:6.8px" width="6" height="6" viewBox="0 0 6 6"><circle cx="3" cy="3" r="2.3" fill="#9a9a9a"/><path d="M3,0.700 A2.300,2.300 0 0 1 3,5.300Z" fill="#e8e8e8"/></svg><svg style="left:28.5px;top:3.3px" width="13" height="13" viewBox="0 0 13 13"><g stroke="#e8e8e8" stroke-width="0.9" fill="#e8e8e8"><circle cx="2.6" cy="2.2" r="1.2" stroke="none"/><path d="M5,2.2 H11.6" stroke-dasharray="2.2 1"/><circle cx="2.6" cy="5" r="1.2" stroke="none"/><path d="M5,5 H11.6" stroke-dasharray="4 1"/><circle cx="2.6" cy="7.8" r="1.2" stroke="none"/><path d="M5,7.8 H11.6" stroke-dasharray="2.2 1"/><circle cx="2.6" cy="10.6" r="1.2" stroke="none"/><path d="M5,10.6 H11.6" stroke-dasharray="4 1"/></g></svg><div class="t b" style="left:50px;top:4.8px;font-size:5.600px;letter-spacing:-0.100px;color:#f4f4f4;width:63px;overflow:hidden">Colour Balance Adjustme</div><div class="vis" style="background:#19a2f4;height:18.8px"><svg style="left:5px;top:6.4px" width="8" height="6" viewBox="0 0 8 6"><ellipse cx="4" cy="3" rx="3.2" ry="1.9" fill="none" stroke="#0d64a8" stroke-width="0.8"/></svg></div></div>
<div class="row" style="background:#3e3e3e;top:219.8px;height:19.6px"><div class="abs" style="left:0;top:0;width:5px;height:19.6px;background:#2f2f2f"></div><div class="abs" style="left:6.800px;top:0;width:1px;height:19.6px;background:#555"></div><div class="abs" style="left:12.800px;top:0;width:1px;height:19.6px;background:#555"></div><svg style="left:15.500px;top:6.3px" width="7" height="7" viewBox="0 0 7 7"><path d="M1,1 h1v1h-1z M3,1 h1v1h-1z M5,1 h1v1h-1z M2,2 h1v1h-1z M4,2h1v1h-1z M1,3 h1v1h-1z M3,3h1v1h-1z M5,3h1v1h-1z M2,4h1v1h-1z M4,4h1v1h-1z M1,5h1v1h-1z M3,5h1v1h-1z M5,5h1v1h-1z" fill="#888"/></svg><div class="abs" style="left:25.800px;top:1px;width:17.500px;height:17.600px;background:#2d2d2d"></div><svg style="left:25.800px;top:1px" width="18" height="18" viewBox="0 0 18 18"><path d="M2,9.500 C5,6 12,6 16,9.500" fill="none" stroke="#c01a78" stroke-width="3.200" stroke-linecap="round"/></svg><div class="t" style="left:50px;top:4.8px;font-size:5.900px;color:#6c6c6c">Pixel</div><div class="vis" style="background:#19a2f4;height:18.8px"><svg style="left:5px;top:6.4px" width="8" height="6" viewBox="0 0 8 6"><ellipse cx="4" cy="3" rx="3.2" ry="1.9" fill="none" stroke="#0d64a8" stroke-width="0.8"/></svg></div></div>
<div class="row" style="background:#3e3e3e;top:239.4px;height:19.6px"><div class="abs" style="left:0;top:0;width:5px;height:19.6px;background:#2f2f2f"></div><div class="abs" style="left:6.800px;top:0;width:1px;height:19.6px;background:#555"></div><div class="abs" style="left:12.800px;top:0;width:1px;height:19.6px;background:#555"></div><svg style="left:15.5px;top:6.3px" width="5" height="7" viewBox="0 0 5 7"><path d="M1,0.800 L4,3.500 L1,6.200" fill="none" stroke="#f0f0f0" stroke-width="1.200"/></svg><div class="abs" style="left:25.800px;top:1px;width:17.500px;height:17.600px;background:#262626"></div><svg style="left:25.800px;top:1px" width="18" height="18" viewBox="0 0 18 18"><ellipse cx="6" cy="10" rx="4" ry="5" fill="#e8601a"/><ellipse cx="12.500" cy="11" rx="4" ry="3" fill="#f08a1c"/><ellipse cx="9" cy="13" rx="4" ry="2.500" fill="#c84a12"/></svg><div class="t" style="left:50px;top:4.8px;font-size:5.900px;color:#6c6c6c">Group</div><div class="vis" style="background:#19a2f4;height:18.8px"><svg style="left:5px;top:6.4px" width="8" height="6" viewBox="0 0 8 6"><ellipse cx="4" cy="3" rx="3.2" ry="1.9" fill="none" stroke="#0d64a8" stroke-width="0.8"/></svg></div></div>
<div class="row" style="background:#3e3e3e;top:259px;height:19.6px"><div class="abs" style="left:0;top:0;width:5px;height:19.6px;background:#2f2f2f"></div><div class="abs" style="left:6.800px;top:0;width:1px;height:19.6px;background:#555"></div><div class="abs" style="left:12.800px;top:0;width:1px;height:19.6px;background:#555"></div><svg style="left:17px;top:6.8px" width="6" height="6" viewBox="0 0 6 6"><circle cx="3" cy="3" r="2.3" fill="#9a9a9a"/><path d="M3,0.700 A2.300,2.300 0 0 1 3,5.300Z" fill="#e8e8e8"/></svg><svg style="left:29px;top:3.8px" width="12" height="12" viewBox="0 0 12 12"><rect x="0.6" y="0.6" width="10.6" height="10.6" rx="1" fill="none" stroke="#d8d8d8" stroke-width="0.9"/><path d="M2.4,8.6 C4,8.4 4.400,5.600 5.600,5.800 C6.800,6 6.800,7 7.800,6.400 C8.600,5.800 8.800,4.400 9.800,3.600" fill="none" stroke="#d8d8d8" stroke-width="0.9"/></svg><div class="t b" style="left:50px;top:4.8px;font-size:5.600px;letter-spacing:-0.100px;color:#f4f4f4">Curves 1</div><div class="vis" style="background:#19a2f4;height:18.8px"><svg style="left:5px;top:6.4px" width="8" height="6" viewBox="0 0 8 6"><ellipse cx="4" cy="3" rx="3.2" ry="1.9" fill="none" stroke="#0d64a8" stroke-width="0.8"/></svg></div></div>
<div class="row" style="background:#3e3e3e;top:278.6px;height:19.6px"><div class="abs" style="left:0;top:0;width:5px;height:19.6px;background:#2f2f2f"></div><div class="abs" style="left:6.800px;top:0;width:1px;height:19.6px;background:#555"></div><div class="abs" style="left:12.800px;top:0;width:1px;height:19.6px;background:#555"></div><svg style="left:17px;top:6.8px" width="6" height="6" viewBox="0 0 6 6"><circle cx="3" cy="3" r="2.3" fill="#9a9a9a"/><path d="M3,0.700 A2.300,2.300 0 0 1 3,5.300Z" fill="#e8e8e8"/></svg><svg style="left:29px;top:3.8px" width="12" height="12" viewBox="0 0 12 12"><rect x="0.6" y="0.6" width="10.6" height="10.6" rx="1" fill="none" stroke="#d8d8d8" stroke-width="0.9"/><path d="M2.4,8.6 C4,8.4 4.400,5.600 5.600,5.800 C6.800,6 6.800,7 7.800,6.400 C8.600,5.800 8.800,4.400 9.800,3.600" fill="none" stroke="#d8d8d8" stroke-width="0.9"/></svg><div class="t b" style="left:50px;top:4.8px;font-size:5.600px;letter-spacing:-0.100px;color:#f4f4f4">Curves 2</div><div class="vis" style="background:#19a2f4;height:18.8px"><svg style="left:5px;top:6.4px" width="8" height="6" viewBox="0 0 8 6"><ellipse cx="4" cy="3" rx="3.2" ry="1.9" fill="none" stroke="#0d64a8" stroke-width="0.8"/></svg></div></div>
<div class="row" style="background:#3e3e3e;top:298.2px;height:19.6px"><div class="abs" style="left:0;top:0;width:5px;height:19.6px;background:#2f2f2f"></div><div class="abs" style="left:6.800px;top:0;width:1px;height:19.6px;background:#555"></div><svg style="left:9.500px;top:2px" width="6" height="6" viewBox="0 0 6 6"><path d="M1,0.500 V5.500 M3,0.500 V5.500 M5,0.500 V5.500 M0.500,1.500 H5.500 M0.500,4 H5.500" stroke="#8a8a8a" stroke-width="0.600" fill="none"/></svg><svg style="left:9.5px;top:10.3px" width="5" height="7" viewBox="0 0 5 7"><path d="M1,0.800 L4,3.500 L1,6.200" fill="none" stroke="#f0f0f0" stroke-width="1.200"/></svg><div class="abs" style="left:20.500px;top:0.500px;width:17.500px;height:18.400px;background:#2a2a2a"></div><svg style="left:20.500px;top:0.500px" width="18" height="19" viewBox="0 0 18 19"><ellipse cx="10.500" cy="7" rx="4.500" ry="5" fill="#070709"/><ellipse cx="7" cy="5.500" rx="3" ry="3" fill="#f070a0"/><circle cx="9" cy="10.500" r="1.500" fill="#ffa020"/><path d="M1.500,18 V13.500 h1.500 V18z M4,18 V12.500 h1.500 V18z M6.500,18 v-4.500 h1.500 v4.500z M9,18 v-5 h1.500 v5z M11.500,18 v-4 h1.500 v4z M14,18 v-5.500 h1.500 v5.500z" fill="#dcdcff"/><path d="M2,13 h13" stroke="#e8e8ff" stroke-width="0.800"/></svg><div class="t" style="left:44.600px;top:4.8px;font-size:5.900px;color:#f0f0f0">Portrait</div><div class="vis" style="background:#f8705c;height:18.8px"><svg style="left:5px;top:6.4px" width="8" height="6" viewBox="0 0 8 6"><ellipse cx="4" cy="3" rx="3.2" ry="1.9" fill="none" stroke="#a8382c" stroke-width="0.8"/></svg></div></div>
<div class="row" style="background:#3e3e3e;top:317.8px;height:19.6px"><div class="abs" style="left:0;top:0;width:5px;height:19.6px;background:#2f2f2f"></div><svg style="left:8px;top:6.3px" width="5" height="7" viewBox="0 0 5 7"><path d="M1,0.800 L4,3.500 L1,6.200" fill="none" stroke="#f0f0f0" stroke-width="1.200"/></svg><div class="abs" style="left:15.400px;top:0.500px;width:19.300px;height:18.400px;background:#303030"></div><svg style="left:15.400px;top:0.500px" width="20" height="19" viewBox="0 0 20 19"><ellipse cx="8" cy="8" rx="6" ry="6" fill="#ff6aa8"/><ellipse cx="12" cy="11" rx="5" ry="6" fill="#f44ab8"/><ellipse cx="6" cy="5" rx="4" ry="3.500" fill="#ff9a40"/><ellipse cx="9" cy="15" rx="4" ry="2.500" fill="#e838b0"/></svg><div class="t" style="left:40px;top:4.8px;font-size:5.900px;color:#f0f0f0">Flowers back</div><div class="vis" style="background:#ffb92e;height:18.8px"><svg style="left:5px;top:6.4px" width="8" height="6" viewBox="0 0 8 6"><ellipse cx="4" cy="3" rx="3.2" ry="1.9" fill="none" stroke="#ffd98a" stroke-width="0.8"/></svg></div></div>
<div class="row" style="background:#3e3e3e;top:337.4px;height:19.6px"><div class="abs" style="left:0;top:0;width:5px;height:19.6px;background:#2f2f2f"></div><svg style="left:8px;top:6.3px" width="5" height="7" viewBox="0 0 5 7"><path d="M1,0.800 L4,3.500 L1,6.200" fill="none" stroke="#f0f0f0" stroke-width="1.200"/></svg><div class="abs" style="left:15.400px;top:0.500px;width:19.300px;height:18.400px;background:#2b2b2b"></div><div class="abs" style="left:33.600px;top:5px;width:1.200px;height:9px;background:#777"></div><div class="t" style="left:40px;top:4.8px;font-size:5.900px;color:#f0f0f0">Side glows</div><div class="vis" style="background:#c6c6c6;height:18.8px"><svg style="left:5px;top:6.4px" width="8" height="6" viewBox="0 0 8 6"><ellipse cx="4" cy="3" rx="3.2" ry="1.9" fill="none" stroke="#e6e6e6" stroke-width="0.8"/></svg></div></div>
<div class="row" style="background:#3e3e3e;top:357px;height:19.6px"><div class="abs" style="left:0;top:0;width:5px;height:19.6px;background:#2f2f2f"></div><div class="abs" style="left:6px;top:0;width:118.300px;height:18.8px;background:#1a73d6"></div><svg style="left:7.500px;top:5.8px" width="6" height="8" viewBox="0 0 6 8"><circle cx="1.500" cy="1.500" r="0.900" fill="#bcd8ff"/><circle cx="4.500" cy="1.500" r="0.900" fill="#bcd8ff"/><path d="M1,4 H5 M1,6.500 H5" stroke="#bcd8ff" stroke-width="0.800" stroke-dasharray="1.400 0.800"/></svg><div class="abs" style="left:15.400px;top:0.500px;width:19.300px;height:18.200px;background:linear-gradient(180deg,#ff0a84 0%,#d830e0 16%,#30a8f0 28%,#f4fbe8 40%,#fffce6 58%,#a8f830 70%,#d8e020 86%,#f2c810 100%)"></div><div class="t" style="left:40px;top:4.8px;font-size:5.900px;color:#fff">Background</div><div class="vis" style="background:#c6c6c6;height:18.8px"><svg style="left:5px;top:6.4px" width="8" height="6" viewBox="0 0 8 6"><ellipse cx="4" cy="3" rx="3.2" ry="1.9" fill="none" stroke="#e6e6e6" stroke-width="0.8"/></svg></div></div>
<div class="abs" style="left:0;top:376.600px;width:145px;height:20.400px;background:#404040"></div>
<svg style="left:0;top:376.600px" width="145" height="20" viewBox="879 423.600 145 20">
<rect x="884" y="429.600" width="8.600" height="8.600" rx="1" fill="#555" stroke="#888" stroke-width="0.700"/><path d="M886.400,435.800 L889.800,432.400" stroke="#ccc" stroke-width="0.900"/>
<rect x="912.200" y="429.400" width="9" height="9" rx="1.200" fill="#e8e8e8"/><text x="916.700" y="436.600" text-anchor="middle" font-size="6.200" font-weight="bold" font-style="italic" fill="#2c2c2c" font-family="Liberation Sans,sans-serif">fx</text>
<rect x="924" y="429.400" width="9" height="9" rx="1.200" fill="#e8e8e8"/><circle cx="928.500" cy="433.900" r="2.700" fill="#2c2c2c"/>
<path d="M936,429.400 H943.800 L941,433.900 L943.800,438.400 H936 L938.800,433.900Z" fill="#e8e8e8"/>
<circle cx="951" cy="433.900" r="4.300" fill="#e8e8e8"/><path d="M948,437 A4.300,4.300 0 0 0 954,430.800Z" fill="#3b3b3b"/><circle cx="951" cy="433.900" r="4.300" fill="none" stroke="#e8e8e8" stroke-width="0.900"/>
<rect x="972.400" y="429.600" width="8.800" height="8.800" rx="1.200" fill="none" stroke="#d8d8d8" stroke-width="0.900"/><circle cx="975.800" cy="433" r="2.200" fill="#e8e8e8"/><circle cx="978" cy="435.400" r="2.200" fill="#9a9a9a"/>
<path d="M983.800,431 H987 L988,432.200 H992.400 V438.400 H983.800Z" fill="none" stroke="#d8d8d8" stroke-width="0.900"/>
<g fill="#e0e0e0"><path d="M996,429.800h2v2h-2z M1000,429.800h2v2h-2z M998,431.800h2v2h-2z M1002,431.800h2v2h-2z M996,433.800h2v2h-2z M1000,433.800h2v2h-2z M998,435.800h2v2h-2z M1002,435.800h2v2h-2z"/></g>
<g fill="none" stroke="#d8d8d8" stroke-width="0.900"><path d="M1009,431.400 H1015.400 M1010,431.400 V438.600 H1014.400 V431.400 M1011,430 H1013.400 M1011.400,433 V437 M1013,433 V437"/></g>
</svg>

<div class="abs" style="left:0;top:396.500px;width:145px;height:1.500px;background:#262626"></div>
<div class="tabrow" style="top:398px;height:13.500px"></div>
<div class="abs" style="left:5.400px;top:399.600px;width:1.600px;height:10px;background:#5a5a5a;border-radius:1px"></div>
<div class="t" style="left:14.600px;top:398.700px;font-size:5.800px;color:#cfcfcf">Transform</div>
<div class="tabhi" style="left:44px;top:398.800px;width:30px;height:10px"></div>
<div class="t b" style="left:46.400px;top:398.700px;font-size:5.800px;color:#fff">Navigator</div>
<div class="t" style="left:77.300px;top:398.700px;font-size:5.800px;color:#cfcfcf">History</div>
<div class="chev" style="left:128px;top:399.800px"></div>
<svg style="left:130.300px;top:402.800px" width="5" height="4" viewBox="0 0 5 4"><path d="M0.500,0.600 L2.500,3 L4.500,0.600" fill="none" stroke="#e0e0e0" stroke-width="1"/></svg>
<!-- zoom slider -->
<div class="abs" style="left:7.500px;top:417px;width:7.200px;height:8px;border-radius:1.500px;background:#505050"></div>
<div class="abs" style="left:9.400px;top:420.600px;width:3.400px;height:0.900px;background:#bbb"></div>
<div class="abs" style="left:18px;top:419px;width:83px;height:4px;border-radius:2px;background:#2a2a2a"></div>
<div class="abs" style="left:18px;top:419px;width:16px;height:4px;border-radius:2px;background:#2e7de0"></div>
<div class="abs" style="left:33px;top:417.400px;width:2.400px;height:7.200px;border-radius:1px;background:#e8e8e8"></div>
<svg style="left:18px;top:424px" width="84" height="3" viewBox="0 0 84 3"><path d="M28,0.500 V2.500 M38,0.500 V2.500 M48,0.500 V2.500 M58,0.500 V2.500 M68,0.500 V2.500" stroke="#555" stroke-width="0.800"/></svg>
<div class="abs" style="left:104px;top:417px;width:8px;height:8px;border-radius:1.500px;background:#4a4a4a"></div>
<svg style="left:105.500px;top:418.500px" width="5" height="5" viewBox="0 0 5 5"><path d="M2.500,0.500 V4.500 M0.500,2.500 H4.500" stroke="#bbb" stroke-width="0.900"/></svg>
<div class="dark" style="left:115px;top:416.400px;width:23px;height:9.400px"></div>
<div class="t b" style="left:121px;top:416.300px;font-size:6px;color:#f0f0f0">50 %</div>
<!-- view point -->
<div class="abs" style="left:0;top:430.600px;width:145px;height:11.800px;background:#585858"></div>
<div class="t b" style="left:3.400px;top:431.600px;font-size:5.500px;letter-spacing:-0.050px;color:#f4f4f4">View Point 1</div>
<svg style="left:136px;top:432.600px" width="4" height="8" viewBox="0 0 4 8"><path d="M0.400,3 L2,1 L3.600,3 M0.400,5 L2,7 L3.600,5" fill="none" stroke="#e0e0e0" stroke-width="0.900"/></svg>
<!-- nav thumbnail -->
<div class="abs" style="left:32.900px;top:448px;width:77.800px;height:62px;overflow:hidden;background:linear-gradient(180deg,#fd0386 0%,#ea1cc0 10%,#9a5ce8 16%,#28b0f2 21%,#9fe0f2 27%,#fbfbee 33%,#f6fbd8 40%,#9cf030 47%,#a4ec2a 58%,#e8d814 66%,#ffc600 74%,#ffc200 100%)">
<svg style="left:0;top:0" width="78" height="62" viewBox="0 0 78 62">
<defs><linearGradient id="nvg" x1="0" y1="2" x2="0" y2="41.500" gradientUnits="userSpaceOnUse"><stop offset="0" stop-color="#e0148e"/><stop offset="0.180" stop-color="#c62aa8"/><stop offset="0.300" stop-color="#a0a8c0"/><stop offset="0.420" stop-color="#c8c4b0"/><stop offset="0.700" stop-color="#c4c0a4"/><stop offset="0.800" stop-color="#8cc040"/><stop offset="1" stop-color="#70c428"/></linearGradient></defs>
<rect x="5" y="2" width="60" height="39.500" fill="url(#nvg)"/>
<path d="M5,22 L12,13.500 L17,11.500 L22,15 L30,22 L36,30 V34 H5Z" fill="#b4b4a8" opacity="0.850"/>
<rect x="5" y="2" width="60" height="39.500" fill="none" stroke="#ffd0f0" stroke-width="0.500" opacity="0.700"/>
<ellipse cx="30" cy="11" rx="6.500" ry="7" fill="#d62e78"/><ellipse cx="33" cy="17" rx="5" ry="6" fill="#7a1030"/><circle cx="29.500" cy="10" r="1.700" fill="#fff"/>
<ellipse cx="24" cy="38" rx="8" ry="7" fill="#c06a30"/><ellipse cx="30" cy="30" rx="5" ry="6" fill="#b87838" opacity="0.800"/>
<ellipse cx="28" cy="50" rx="17" ry="12" fill="#ff5a28"/><ellipse cx="20" cy="58" rx="11" ry="9" fill="#f03a9a"/><ellipse cx="46" cy="57" rx="15" ry="10" fill="#d82cc0"/><ellipse cx="34" cy="46" rx="8" ry="6" fill="#ff8a30"/>
<circle cx="21.300" cy="34.500" r="2.200" fill="#fff"/><circle cx="24.800" cy="57.500" r="2.500" fill="#fff"/><circle cx="45.400" cy="56.300" r="2.200" fill="#fff"/>
</svg></div>
<div class="abs" style="left:65.600px;top:447.600px;width:57.400px;height:57.400px;border-radius:50%;background:#fff"></div>
<div class="abs" style="left:90.400px;top:468.500px;width:2.700px;height:15.200px;border-radius:1px;background:#111"></div>
<div class="abs" style="left:96px;top:468.500px;width:2.700px;height:15.200px;border-radius:1px;background:#111"></div>
<!-- footer -->
<div class="abs" style="left:0;top:513px;width:145px;height:14px;background:#363636;border-top:1px solid #2a2a2a"></div>
<div class="t b" style="left:5px;top:513.800px;font-size:5.700px;letter-spacing:-0.050px;color:#f0f0f0">Inioluwa Alabi (50.0%)</div>
<svg style="left:132.500px;top:515.500px" width="8" height="8" viewBox="0 0 8 8"><path d="M4,0.600 L5,3 L7.600,3.200 L5.600,4.900 L6.200,7.400 L4,6 L1.800,7.400 L2.400,4.900 L0.400,3.200 L3,3Z" fill="#9a9a9a"/></svg>


</div>
<div class="abs" id="botstrip" style="left:0;top:571.500px;width:1024px;height:2.500px;background:#232323;z-index:5"></div>
<div class="abs" style="left:1020.600px;top:47px;width:3.400px;height:527px;background:#2e2e2e;z-index:4"></div>
</body>
</html>
